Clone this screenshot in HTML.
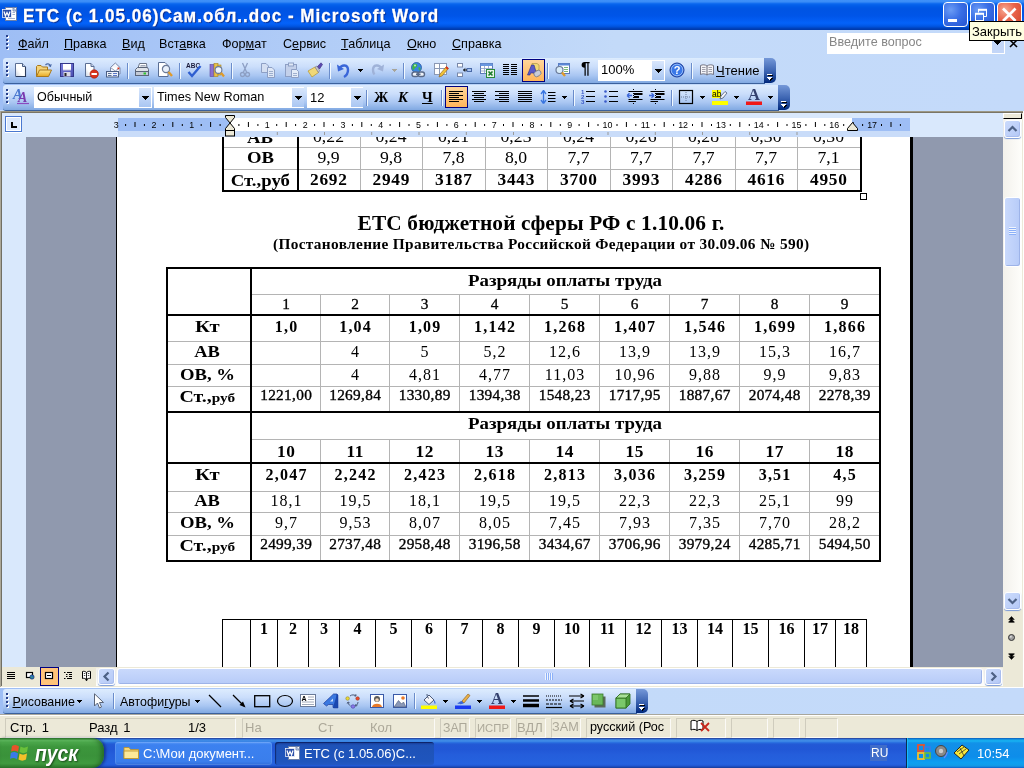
<!DOCTYPE html><html><head><meta charset="utf-8"><title>Word</title><style>
*{box-sizing:border-box;margin:0;padding:0}
html,body{width:1024px;height:768px;overflow:hidden;background:#c3daf9}
body{position:relative;font-family:"Liberation Sans",sans-serif;font-size:13px;color:#000}
.a{position:absolute}
.t{position:absolute;white-space:pre;line-height:1}
.ser{font-family:"Liberation Serif",serif}
.b{font-weight:bold}
u{text-decoration:underline}
#title{left:0;top:0;width:1024px;height:30px;background:linear-gradient(to bottom,#3f91f9 0,#3a8cf6 2px,#1a74f2 3px,#0a66ee 4px,#0460ea 5px,#0058e6 7px,#0054e3 9px,#0055e8 16px,#025cf2 20px,#0463fa 23px,#025cee 25px,#0050d8 27px,#0044c0 28px,#0038a8 30px)}
#dock{left:0;top:30px;width:1024px;height:80px;background:linear-gradient(to right,#9ebef5 0,#c3daf9 60%,#c4dafa 100%)}
.tb{position:absolute;border-radius:3px 0 0 3px;background:linear-gradient(to bottom,#ddecfe 0%,#cbdefb 35%,#a9c6f2 70%,#81a9e2 100%);border-bottom:1px solid #3b619c}
.tbend{position:absolute;border-radius:0 5px 5px 0;background:linear-gradient(to bottom,#7598d8 0%,#3a62b0 55%,#00287c 100%)}
.sep{position:absolute;width:2px;border-left:1px solid #6a8ccb;border-right:1px solid #f1f9ff}
.combo{position:absolute;background:#fff;height:21px}
.cbtn{position:absolute;width:12px;background:linear-gradient(to bottom,#d8e6fc,#a9c6f2)}
.chk{position:absolute;background:linear-gradient(to bottom,#ffd59a,#ffb55a);border:1px solid #000080}
.dd{position:absolute;width:0;height:0;border:3.500px solid transparent;border-top:4px solid #000;border-bottom:0}
.ic{position:absolute;width:16px;height:16px;overflow:visible}
.sp{position:absolute;border:1px solid;border-color:#cfccbd #fbfaf6 #fbfaf6 #cfccbd;height:20px;top:718px}
.dis{color:#aca899}
table.dt{position:absolute;border-collapse:collapse;table-layout:fixed;font-family:"Liberation Serif",serif}
table.dt td{border:1px solid #b4b4b4;text-align:center;vertical-align:top;padding:0;white-space:nowrap;overflow:hidden;line-height:1}
</style></head><body><div id="root" style="position:absolute;left:0;top:0;width:1024px;height:768px;overflow:hidden;will-change:transform">
<svg width="0" height="0" style="position:absolute"><defs><linearGradient id="gdoc" x1="1" y1="0" x2="0" y2="1"><stop offset="0" stop-color="#fff"/><stop offset=".6" stop-color="#fff"/><stop offset="1" stop-color="#c4cede"/></linearGradient><linearGradient id="gfold" x1="0" y1="0" x2="0" y2="1"><stop offset="0" stop-color="#fde690"/><stop offset="1" stop-color="#e8a820"/></linearGradient><linearGradient id="gsave" x1="0" y1="0" x2="1" y2="1"><stop offset="0" stop-color="#7a7ee0"/><stop offset="1" stop-color="#4a4eb0"/></linearGradient></defs></svg>
<div id="title" class="a"></div>
<svg class="a" style="left:2px;top:6px" width="16" height="16" viewBox="0 0 16 16"><rect x="3.500" y="1.500" width="11" height="13" fill="#fff" stroke="#6b7fa8"/><path d="M11 1.500 L14.500 5 H11Z" fill="#c9d6ee" stroke="#6b7fa8" stroke-width=".8"/><rect x="0.5" y="3.500" width="9" height="8" fill="#2b4fa8" stroke="#fff" stroke-width=".7"/><path d="M2 5.500 L3.400 10 L5 6.500 L6.600 10 L8 5.500" stroke="#fff" stroke-width="1.200" fill="none"/><path d="M6 12.500H13M10.500 8.500H13M10.500 6.500H13" stroke="#8a9cc4" stroke-width=".8"/></svg>
<div class="t b" style="left:22.500px;top:6px;font-size:19px;color:#fff;letter-spacing:1.100px;transform:scaleX(.9);transform-origin:0 0;-webkit-text-stroke:.3px #fff;text-shadow:1px 1px 1px #0a2a8a">ЕТС (с 1.05.06)Сам.обл..doc - Microsoft Word</div>
<div class="a" style="left:943px;top:2px;width:25px;height:25px;border:1px solid #fff;border-radius:4px;background:radial-gradient(circle at 30% 30%,#6b9cf5 0%,#3a6fe6 45%,#2453d0 100%)"></div>
<div class="a" style="left:970px;top:2px;width:25px;height:25px;border:1px solid #fff;border-radius:4px;background:radial-gradient(circle at 30% 30%,#6b9cf5 0%,#3a6fe6 45%,#2453d0 100%)"></div>
<div class="a" style="left:997px;top:2px;width:25px;height:25px;border:1px solid #fff;border-radius:4px;background:radial-gradient(circle at 30% 30%,#f7ab94 0%,#e8634a 45%,#cf4529 100%)"></div>
<div class="a" style="left:948px;top:19px;width:9px;height:3px;background:#fff"></div>
<svg class="a" style="left:969px;top:3px" width="24" height="24" viewBox="0 0 24 24" fill="none" stroke="#fff"><path d="M9.500 9.500V6.500H17.500V13.500H15" stroke-width="1"/><path d="M9 6.800H18" stroke-width="2"/><rect x="6.500" y="10.500" width="8" height="7" stroke-width="1"/><path d="M6 10.800H15" stroke-width="2"/></svg>
<svg class="a" style="left:997px;top:2px" width="25" height="25" viewBox="0 0 25 25"><path d="M6 6.500L18.500 19M18.500 6.500L6 19" stroke="#fff" stroke-width="2.700"/></svg>
<div id="dock" class="a"></div>
<div class="a" style="left:7px;top:36px;width:2px;height:14px;background:repeating-linear-gradient(to bottom,#fff 0,#fff 2px,transparent 2px,transparent 4px)"></div>
<div class="a" style="left:6px;top:35px;width:2px;height:14px;background:repeating-linear-gradient(to bottom,#27408b 0,#27408b 2px,transparent 2px,transparent 4px)"></div>
<div class="t" style="left:18px;top:38px;font-size:12.600px"><u>Ф</u>айл</div>
<div class="t" style="left:64px;top:38px;font-size:12.600px"><u>П</u>равка</div>
<div class="t" style="left:122px;top:38px;font-size:12.600px"><u>В</u>ид</div>
<div class="t" style="left:159px;top:38px;font-size:12.600px">Вст<u>а</u>вка</div>
<div class="t" style="left:222px;top:38px;font-size:12.600px">Фор<u>м</u>ат</div>
<div class="t" style="left:283px;top:38px;font-size:12.600px">С<u>е</u>рвис</div>
<div class="t" style="left:341px;top:38px;font-size:12.600px"><u>Т</u>аблица</div>
<div class="t" style="left:407px;top:38px;font-size:12.600px"><u>О</u>кно</div>
<div class="t" style="left:452px;top:38px;font-size:12.600px"><u>С</u>правка</div>
<div class="a" style="left:827px;top:33px;width:178px;height:21px;background:#fff"></div>
<div class="t" style="left:829px;top:36px;font-size:12.600px;color:#868686">Введите вопрос</div>
<div class="a" style="left:992px;top:34px;width:12px;height:19px;background:#c3d6f8"></div>
<svg class="a" style="left:994px;top:41px" width="7" height="4" fill="#000" shape-rendering="crispEdges"><rect x="0.0" y="0" width="7" height="1"/><rect x="1.0" y="1" width="5" height="1"/><rect x="2.0" y="2" width="3" height="1"/><rect x="3.0" y="3" width="1" height="1"/></svg>
<svg class="a" style="left:1009px;top:39px" width="9" height="9" viewBox="0 0 9 9"><path d="M1 1L8 8M8 1L1 8" stroke="#000" stroke-width="1.600"/></svg>
<div class="tb" style="left:3px;top:58px;width:762px;height:26px"></div>
<div class="tbend" style="left:764px;top:58px;width:12px;height:25px"></div>
<svg class="a" style="left:767px;top:73px" width="8" height="8" shape-rendering="crispEdges"><g fill="#000"><rect x="1" y="2" width="5" height="1"/><rect x="1" y="5" width="5" height="1"/><rect x="2" y="6" width="3" height="1"/><rect x="3" y="7" width="1" height="1"/></g><g fill="#fff"><rect x="0" y="1" width="5" height="1"/><rect x="0" y="4" width="5" height="1"/><rect x="1" y="5" width="3" height="1"/><rect x="2" y="6" width="1" height="1"/></g></svg>
<div class="a" style="left:7px;top:63px;width:2px;height:14px;background:repeating-linear-gradient(to bottom,#fff 0,#fff 2px,transparent 2px,transparent 4px)"></div>
<div class="a" style="left:6px;top:62px;width:2px;height:14px;background:repeating-linear-gradient(to bottom,#27408b 0,#27408b 2px,transparent 2px,transparent 4px)"></div>
<svg class="ic" style="left:13px;top:62px;" viewBox="0 0 16 16"><path d="M2.500 1.500H9.500L12.500 4.500V14.500H2.500Z" fill="url(#gdoc)" stroke="#5a6e94"/><path d="M3 14.500H12.500V5" fill="none" stroke="#2a3a5a" stroke-width="1.100"/><path d="M9.500 1.500V4.500H12.500" fill="#c8d4ea" stroke="#4a5e84"/></svg>
<svg class="ic" style="left:36px;top:62px;" viewBox="0 0 16 16"><path d="M.5 14.500V4.500L1.500 3.500H5L6.500 5H11.500V8" fill="#f4d37a" stroke="#a8781c"/><path d="M.5 14.500L3.500 8H15.500L12.500 14.500Z" fill="url(#gfold)" stroke="#a8781c"/><path d="M9.500 3C11 1.200 13.500 1.500 14.500 4" stroke="#4a6aa8" stroke-width="1.200" fill="none"/><path d="M15.800 2L14.800 5.200L12.200 3.800Z" fill="#4a6aa8"/></svg>
<svg class="ic" style="left:59px;top:62px;" viewBox="0 0 16 16"><rect x="1.500" y="1.500" width="13" height="13" fill="url(#gsave)" stroke="#33378a"/><rect x="4" y="2" width="8" height="6" fill="#fff"/><path d="M4 8H12" stroke="#c8c8e0"/><rect x="4.500" y="10" width="7" height="4.500" fill="#d8d8e8"/><rect x="5.500" y="11" width="2" height="3" fill="#222"/></svg>
<svg class="ic" style="left:83px;top:62px;" viewBox="0 0 16 16"><path d="M2.500 1.500H8L11 4.500V14.500H2.500Z" fill="url(#gdoc)" stroke="#5a6e94"/><path d="M8 1.500V4.500H11" fill="#c8d4ea" stroke="#5a6e94"/><circle cx="11.200" cy="12" r="4.200" fill="#d8321c" stroke="#a01808" stroke-width=".6"/><rect x="8.500" y="11" width="5.400" height="2" fill="#fff"/></svg>
<svg class="ic" style="left:105px;top:62px;" viewBox="0 0 16 16"><path d="M5.500 5.500L10.300 1L15 5.500V12H5.500Z" fill="#f4f6fb" stroke="#7a88a8"/><path d="M5.500 5.500L10.300 9L15 5.500" fill="#fff" stroke="#7a88a8" stroke-width=".8"/><rect x="12.500" y="5.500" width="1.800" height="1.800" fill="#d8321c"/><rect x="1.500" y="9.500" width="12" height="5.500" fill="#eef2fa" stroke="#4a5e84"/><path d="M3 11.500H6.500M3 13.500H6.500" stroke="#5a6e94"/><path d="M8 11.500H12M8 13.500H12" stroke="#5a78c8"/></svg>
<div class="sep" style="left:127px;top:63px;height:16px"></div>
<svg class="ic" style="left:134px;top:62px;" viewBox="0 0 16 16"><path d="M4 6L5.500 1.500H12.500L13 6" fill="#fff" stroke="#6a7488"/><path d="M6.500 3.500H11.500M6 5H12" stroke="#8a94a8" stroke-width=".8"/><path d="M1.500 7.500L3.500 5.500H13.500L14.500 7.500V13.500H1.500Z" fill="#dfe3ea" stroke="#5a6478"/><rect x="1.500" y="9.500" width="13" height="4" fill="#c4cad6" stroke="#5a6478"/><rect x="9.500" y="10.500" width="2.500" height="2" fill="#2fc22f"/></svg>
<svg class="ic" style="left:157px;top:62px;" viewBox="0 0 16 16"><path d="M1.500 .5H8L11 3.500V14.500H1.500Z" fill="#fff" stroke="#5a6e94"/><circle cx="9" cy="7" r="3.600" fill="#e8f0fb" stroke="#6a7a98" stroke-width="1.200"/><path d="M11.500 10L15 14" stroke="#e09a2a" stroke-width="2.400"/></svg>
<div class="sep" style="left:179px;top:63px;height:16px"></div>
<svg class="ic" style="left:186px;top:62px;" viewBox="0 0 16 16"><text x="0" y="6" font-family="Liberation Sans,sans-serif" font-size="6.500" font-weight="bold" fill="#1a1a3a">ABC</text><path d="M2.500 10L6 14L14.500 4" stroke="#2f5fd0" stroke-width="2.400" fill="none"/></svg>
<svg class="ic" style="left:209px;top:62px;" viewBox="0 0 16 16"><rect x="1" y="2.500" width="4" height="12" fill="#8a70d0" stroke="#5a48a0" stroke-width=".6"/><rect x="5" y="1.500" width="4" height="13" fill="#e8c04a" stroke="#a8841c" stroke-width=".6"/><rect x="9" y="3" width="3" height="10" fill="#e8c04a" stroke="#a8841c" stroke-width=".6"/><circle cx="9.500" cy="8" r="3.400" fill="#eef4fc" stroke="#6a7a98" stroke-width="1.100"/><path d="M12 10.800L15 14.500" stroke="#e09a2a" stroke-width="2.200"/></svg>
<div class="sep" style="left:231px;top:63px;height:16px"></div>
<svg class="ic" style="left:237px;top:62px;" viewBox="0 0 16 16"><path d="M5.500 1L9.500 10M10.500 1L6.500 10" stroke="#8d9fc4" stroke-width="1.300" fill="none"/><circle cx="5.500" cy="12.500" r="2" fill="none" stroke="#8d9fc4" stroke-width="1.300"/><circle cx="10.500" cy="12.500" r="2" fill="none" stroke="#8d9fc4" stroke-width="1.300"/></svg>
<svg class="ic" style="left:260px;top:62px;" viewBox="0 0 16 16"><path d="M1.500 1.500H6L8.500 4V10.500H1.500Z" fill="#d4dff2" stroke="#8d9fc4"/><path d="M7.500 5.500H12L14.500 8V15.500H7.500Z" fill="#dfe8f6" stroke="#8d9fc4"/><path d="M9 9.500H13M9 11.500H13M9 13.500H13" stroke="#8d9fc4" stroke-width=".8"/></svg>
<svg class="ic" style="left:284px;top:62px;" viewBox="0 0 16 16"><rect x="1.500" y="2.500" width="11" height="12" fill="#c3d0ea" stroke="#8d9fc4"/><rect x="4.500" y="1" width="5" height="3" fill="#dfe8f6" stroke="#8d9fc4"/><path d="M7.500 7.500H12.500L14.500 9.500V15.500H7.500Z" fill="#e4ecf8" stroke="#8d9fc4"/><path d="M9 11.500H13M9 13.500H13" stroke="#8d9fc4" stroke-width=".8"/></svg>
<svg class="ic" style="left:307px;top:62px;" viewBox="0 0 16 16"><path d="M1 9L8 5L11.500 10.500L5 15Z" fill="#f0d878" stroke="#b8962a" stroke-width=".7"/><path d="M8 5L10 4L12.500 8.500L11.500 10.500Z" fill="#c8c8d0" stroke="#7a7a88" stroke-width=".6"/><path d="M10.500 4.500L14 .8L15.500 2.500L12.500 7Z" fill="#5a48b0" stroke="#3a2a80" stroke-width=".6"/></svg>
<div class="sep" style="left:329px;top:63px;height:16px"></div>
<svg class="ic" style="left:336px;top:62px;" viewBox="0 0 16 16"><path d="M3.500 6.500C6 2 12 2.500 12 8C12 11 10.500 13.500 8 15" stroke="#3a66d8" stroke-width="2.400" fill="none"/><path d="M1 2.500L2 9.500L8 7Z" fill="#3a66d8"/></svg>
<svg class="a" style="left:358px;top:69px" width="5" height="3" fill="#000" shape-rendering="crispEdges"><rect x="0.0" y="0" width="5" height="1"/><rect x="1.0" y="1" width="3" height="1"/><rect x="2.0" y="2" width="1" height="1"/></svg>
<svg class="ic" style="left:369px;top:62px;" viewBox="0 0 16 16"><path d="M12.500 6.500C10 2 4 2.500 4 8C4 10 4.500 11.500 5.500 12.500" stroke="#9fb2d8" stroke-width="2.400" fill="none"/><path d="M15 2.500L14 9.500L8 7Z" fill="#9fb2d8"/></svg>
<svg class="a" style="left:392px;top:69px" width="5" height="3" fill="#a8a59a" shape-rendering="crispEdges"><rect x="0.0" y="0" width="5" height="1"/><rect x="1.0" y="1" width="3" height="1"/><rect x="2.0" y="2" width="1" height="1"/></svg>
<div class="sep" style="left:403px;top:63px;height:16px"></div>
<svg class="ic" style="left:410px;top:62px;" viewBox="0 0 16 16"><circle cx="6.500" cy="5.500" r="5" fill="#3a86e0" stroke="#1a4a98" stroke-width=".7"/><path d="M4 2C6 1 8 2.500 7 4.500C6 6 4.500 5.500 4 7.500C3.500 9 2.500 8 2.300 6C2.300 4 3 2.500 4 2ZM8.500 5.500C10 4.500 11 6 10.300 7.800C9.500 9.300 8.500 8.500 8.500 5.500Z" fill="#3fb83f"/><circle cx="5" cy="3.500" r="1" fill="#d8f0ff" opacity=".8"/><rect x="2" y="10" width="6.500" height="4.500" rx="2.200" fill="#eef2f8" stroke="#5a6a88" stroke-width="1.400"/><rect x="8" y="10" width="6.500" height="4.500" rx="2.200" fill="#eef2f8" stroke="#5a6a88" stroke-width="1.400"/><path d="M6 12.250H10.500" stroke="#5a6a88" stroke-width="1.600"/></svg>
<svg class="ic" style="left:433px;top:62px;" viewBox="0 0 16 16"><rect x="1.500" y="1.500" width="12" height="11" fill="#fff" stroke="#8a98b4"/><path d="M1.500 6.500H13.500M6.500 1.500V12.500" stroke="#8a98b4"/><path d="M6 15L7 12L13.500 4.500L15.500 6.500L9 14Z" fill="#f0c23a" stroke="#8a5a1a" stroke-width=".6"/><path d="M13 5L15 7" stroke="#d8321c" stroke-width="1.800"/></svg>
<svg class="ic" style="left:456px;top:62px;" viewBox="0 0 16 16"><rect x="1.500" y="1.500" width="5" height="3.500" fill="#fff" stroke="#7a88a8"/><rect x="1.500" y="11" width="5" height="3.500" fill="#fff" stroke="#7a88a8"/><rect x="11" y="6.500" width="4.500" height="3" fill="#a8c4f0" stroke="#4a6aa8"/><path d="M7.500 8H11M7.500 8L9.300 6.500M7.500 8L9.300 9.500" stroke="#000" stroke-width="1" fill="none"/></svg>
<svg class="ic" style="left:479px;top:62px;" viewBox="0 0 16 16"><rect x="1.500" y="1.500" width="12" height="10" fill="#fff" stroke="#5a78b8"/><rect x="1.500" y="1.500" width="12" height="2.500" fill="#6a98e0"/><path d="M1.500 6.500H13.500M1.500 9H13.500M5.500 4V11.500M9.500 4V11.500" stroke="#8aa0c8" stroke-width=".8"/><rect x="7.500" y="7.500" width="8" height="8" fill="#e8f4e8" stroke="#2a8a3a"/><path d="M9.500 9.500L13.500 13.500M13.500 9.500L9.500 13.500" stroke="#1a7a2a" stroke-width="1.600"/></svg>
<svg class="ic" style="left:502px;top:62px;" viewBox="0 0 16 16"><path d="M1 2.500H7M9 2.500H15M1 4.500H7M9 4.500H15M1 6.500H7M9 6.500H15M1 8.500H7M9 8.500H15M1 10.500H7M9 10.500H15M1 12.500H7M9 12.500H15" stroke="#000" stroke-width="1"/></svg>
<div class="chk" style="left:522px;top:59px;width:23px;height:23px"></div>
<svg class="ic" style="left:526px;top:62px;" viewBox="0 0 16 16"><path d="M6 1.500H11L13 3V9H6Z" fill="#f0d878" stroke="#a08a3a" stroke-width=".6"/><path d="M1.500 13L5.500 3H8L11 13H8.500L8 11H4.500L4 13Z" fill="#5a5ac8" stroke="#2a2a88" stroke-width=".6"/><ellipse cx="11.500" cy="11.500" rx="3.800" ry="2.800" transform="rotate(-35 11.500 11.500)" fill="#c8ccd8" stroke="#6a7080" stroke-width=".7"/></svg>
<div class="sep" style="left:547px;top:63px;height:16px"></div>
<svg class="ic" style="left:554px;top:62px;" viewBox="0 0 16 16"><rect x="4.500" y="1.500" width="11" height="10" fill="#fff" stroke="#5a78b8"/><rect x="4.500" y="1.500" width="11" height="2" fill="#5a88d8"/><path d="M10 5.500H14M10 7.500H14M10 9.500H14" stroke="#7ab87a"/><circle cx="5.500" cy="8" r="3.500" fill="#d8ecf8" stroke="#6a7a98" stroke-width="1.200"/><path d="M8 10.500L11 14" stroke="#e09a2a" stroke-width="2.400"/></svg>
<svg class="ic" style="left:578px;top:62px;" viewBox="0 0 16 16"><text x="7.500" y="12.300" text-anchor="middle" font-family="Liberation Sans,sans-serif" font-weight="bold" font-size="16.500" fill="#000">¶</text></svg>
<div class="combo" style="left:598px;top:60px;width:67px;height:21px"></div><div class="cbtn" style="left:652px;top:61px;height:19px"></div>
<svg class="a" style="left:655px;top:69px" width="7" height="4" fill="#000" shape-rendering="crispEdges"><rect x="0.0" y="0" width="7" height="1"/><rect x="1.0" y="1" width="5" height="1"/><rect x="2.0" y="2" width="3" height="1"/><rect x="3.0" y="3" width="1" height="1"/></svg>
<div class="t" style="left:601px;top:63px;font-size:13px">100%</div>
<svg class="ic" style="left:669px;top:62px;" viewBox="0 0 16 16"><circle cx="8" cy="8" r="7" fill="#3a78e8" stroke="#1a3a98"/><circle cx="8" cy="8" r="5.800" fill="none" stroke="#a8c8f8" stroke-width=".8"/><text x="8" y="12" text-anchor="middle" font-family="Liberation Sans,sans-serif" font-weight="bold" font-size="11" fill="#fff">?</text></svg>
<div class="sep" style="left:691px;top:63px;height:16px"></div>
<svg class="ic" style="left:699px;top:62px;" viewBox="0 0 16 16"><path d="M1.500 3.500C3.500 2.500 6 2.500 8 4C10 2.500 12.500 2.500 14.500 3.500V12.500C12.500 11.500 10 11.500 8 13C6 11.500 3.500 11.500 1.500 12.500Z" fill="#f4f4f8" stroke="#6a6a78" stroke-width=".9"/><path d="M8 4V13" stroke="#6a6a78"/><path d="M3 5.500H6.500M3 7.500H6.500M3 9.500H6.500M9.500 5.500H13M9.500 7.500H13M9.500 9.500H13" stroke="#8a8a98" stroke-width=".8"/></svg>
<div class="t" style="left:716px;top:64px;font-size:13px"><u>Ч</u>тение</div>
<div class="tb" style="left:3px;top:85px;width:776px;height:26px"></div>
<div class="tbend" style="left:778px;top:85px;width:12px;height:25px"></div>
<svg class="a" style="left:781px;top:100px" width="8" height="8" shape-rendering="crispEdges"><g fill="#000"><rect x="1" y="2" width="5" height="1"/><rect x="1" y="5" width="5" height="1"/><rect x="2" y="6" width="3" height="1"/><rect x="3" y="7" width="1" height="1"/></g><g fill="#fff"><rect x="0" y="1" width="5" height="1"/><rect x="0" y="4" width="5" height="1"/><rect x="1" y="5" width="3" height="1"/><rect x="2" y="6" width="1" height="1"/></g></svg>
<div class="a" style="left:7px;top:90px;width:2px;height:14px;background:repeating-linear-gradient(to bottom,#fff 0,#fff 2px,transparent 2px,transparent 4px)"></div>
<div class="a" style="left:6px;top:89px;width:2px;height:14px;background:repeating-linear-gradient(to bottom,#27408b 0,#27408b 2px,transparent 2px,transparent 4px)"></div>
<svg class="ic" style="left:14px;top:89px;" viewBox="0 0 16 16"><text x="-1" y="10" font-family="Liberation Serif,serif" font-style="italic" font-weight="bold" font-size="14.500" fill="#4a78d0">A</text><text x="4" y="13" font-family="Liberation Serif,serif" font-style="italic" font-weight="bold" font-size="14" fill="#7a3ab0">A</text><path d="M3 14.500H15" stroke="#8a4ac0" stroke-width="1.200"/></svg>
<div class="combo" style="left:34px;top:87px;width:118px"></div><div class="cbtn" style="left:139px;top:88px;height:19px"></div>
<svg class="a" style="left:142px;top:96px" width="7" height="4" fill="#000" shape-rendering="crispEdges"><rect x="0.0" y="0" width="7" height="1"/><rect x="1.0" y="1" width="5" height="1"/><rect x="2.0" y="2" width="3" height="1"/><rect x="3.0" y="3" width="1" height="1"/></svg>
<div class="t" style="left:37px;top:91px;font-size:12.500px">Обычный</div>
<div class="combo" style="left:154px;top:87px;width:150px"></div><div class="cbtn" style="left:292px;top:88px;height:19px"></div>
<svg class="a" style="left:295px;top:96px" width="7" height="4" fill="#000" shape-rendering="crispEdges"><rect x="0.0" y="0" width="7" height="1"/><rect x="1.0" y="1" width="5" height="1"/><rect x="2.0" y="2" width="3" height="1"/><rect x="3.0" y="3" width="1" height="1"/></svg>
<div class="t" style="left:157px;top:91px;font-size:12.700px">Times New Roman</div>
<div class="combo" style="left:307px;top:87px;width:56px"></div><div class="cbtn" style="left:351px;top:88px;height:19px"></div>
<svg class="a" style="left:354px;top:96px" width="7" height="4" fill="#000" shape-rendering="crispEdges"><rect x="0.0" y="0" width="7" height="1"/><rect x="1.0" y="1" width="5" height="1"/><rect x="2.0" y="2" width="3" height="1"/><rect x="3.0" y="3" width="1" height="1"/></svg>
<div class="t" style="left:310px;top:91px;font-size:13px">12</div>
<div class="sep" style="left:366px;top:90px;height:16px"></div>
<div class="t ser b" style="left:374px;top:90px;font-size:14.500px">Ж</div>
<div class="t ser b" style="left:398px;top:90px;font-size:14.500px;font-style:italic">К</div>
<div class="t ser b" style="left:422px;top:90px;font-size:14.500px"><u>Ч</u></div>
<div class="sep" style="left:441px;top:90px;height:16px"></div>
<div class="chk" style="left:445px;top:86px;width:23px;height:22px"></div>
<svg class="ic" style="left:449px;top:89px;" viewBox="0 0 16 16"><path d="M0 2.5H14M0 4.5H10M0 6.5H14M0 8.5H10M0 10.5H14M0 12.5H10" stroke="#000" stroke-width="1"/></svg>
<svg class="ic" style="left:471px;top:89px;" viewBox="0 0 16 16"><path d="M1 2.5H15M3 4.5H13M1 6.5H15M3 8.5H13M1 10.5H15M3 12.5H13" stroke="#000" stroke-width="1"/></svg>
<svg class="ic" style="left:494px;top:89px;" viewBox="0 0 16 16"><path d="M1 2.5H15M5 4.5H15M1 6.5H15M5 8.5H15M1 10.5H15M5 12.5H15" stroke="#000" stroke-width="1"/></svg>
<svg class="ic" style="left:517px;top:89px;" viewBox="0 0 16 16"><path d="M1 2.5H15M1 4.5H15M1 6.5H15M1 8.5H15M1 10.5H15M1 12.5H15" stroke="#000" stroke-width="1"/></svg>
<svg class="ic" style="left:540px;top:89px;" viewBox="0 0 16 16"><path d="M3.500 2V14M3.500 1.500L1 5M3.500 1.500L6 5M3.500 14.500L1 11M3.500 14.500L6 11" stroke="#3a76e0" stroke-width="1.300" fill="none"/><path d="M8 3.500H15.500M8 6.500H15.500M8 9.500H15.500M8 12.500H15.500" stroke="#000" stroke-width="1"/></svg>
<svg class="a" style="left:562px;top:96px" width="5" height="3" fill="#000" shape-rendering="crispEdges"><rect x="0.0" y="0" width="5" height="1"/><rect x="1.0" y="1" width="3" height="1"/><rect x="2.0" y="2" width="1" height="1"/></svg>
<div class="sep" style="left:573px;top:90px;height:16px"></div>
<svg class="ic" style="left:580px;top:89px;" viewBox="0 0 16 16"><path d="M6 2.500H15M6 7.500H15M6 12.500H15" stroke="#000" stroke-width="1"/><text x="1" y="5" font-family="Liberation Sans,sans-serif" font-size="6" font-weight="bold" fill="#3a5ac8">1</text><text x="1" y="10" font-family="Liberation Sans,sans-serif" font-size="6" font-weight="bold" fill="#3a5ac8">2</text><text x="1" y="15" font-family="Liberation Sans,sans-serif" font-size="6" font-weight="bold" fill="#3a5ac8">3</text></svg>
<svg class="ic" style="left:603px;top:89px;" viewBox="0 0 16 16"><path d="M6 2.500H15M6 7.500H15M6 12.500H15" stroke="#000" stroke-width="1"/><circle cx="2.500" cy="2.500" r="1.300" fill="#3a5ac8"/><circle cx="2.500" cy="7.500" r="1.300" fill="#3a5ac8"/><circle cx="2.500" cy="12.500" r="1.300" fill="#3a5ac8"/></svg>
<svg class="ic" style="left:627px;top:89px;" viewBox="0 0 16 16"><path d="M1.500 2.500H15.500M1.500 10.500H15.500M1.500 12.500H9" stroke="#000" stroke-width="1"/><rect x="7" y="4" width="8.500" height="2" fill="#000"/><rect x="7" y="7" width="5" height="2" fill="#000"/><path d="M6.500 0V15" stroke="#000" stroke-dasharray="1 1"/><path d="M0 6.500H5M0 6.500L2.500 4.300M0 6.500L2.500 8.700" stroke="#3a66d8" stroke-width="1.300" fill="none"/></svg>
<svg class="ic" style="left:649px;top:89px;" viewBox="0 0 16 16"><path d="M1.500 2.500H15.500M1.500 10.500H15.500M1.500 12.500H9" stroke="#000" stroke-width="1"/><rect x="7" y="4" width="8.500" height="2" fill="#000"/><rect x="7" y="7" width="5" height="2" fill="#000"/><path d="M6.500 0V15" stroke="#000" stroke-dasharray="1 1"/><path d="M0 6.500H5M5 6.500L2.500 4.300M5 6.500L2.500 8.700" stroke="#3a66d8" stroke-width="1.300" fill="none"/></svg>
<div class="sep" style="left:671px;top:90px;height:16px"></div>
<svg class="ic" style="left:678px;top:89px;" viewBox="0 0 16 16"><rect x="1.500" y="1.500" width="13" height="13" fill="none" stroke="#000" stroke-width="1.200"/><path d="M8 3V13M3 8H13" stroke="#6a7a98" stroke-dasharray="1 1"/></svg>
<svg class="a" style="left:700px;top:96px" width="5" height="3" fill="#000" shape-rendering="crispEdges"><rect x="0.0" y="0" width="5" height="1"/><rect x="1.0" y="1" width="3" height="1"/><rect x="2.0" y="2" width="1" height="1"/></svg>
<svg class="ic" style="left:712px;top:89px;" viewBox="0 0 16 16"><rect x="0" y="1" width="9" height="8" fill="#ffff00"/><text x="0" y="7.500" font-family="Liberation Sans,sans-serif" font-size="8.500" fill="#000">ab</text><path d="M8 10L9 7L13 2.500L15 4L11 9Z" fill="#f4f4f8" stroke="#4a5a7a" stroke-width=".8"/><rect x="0" y="12" width="16" height="4" fill="#ffff00"/></svg>
<svg class="a" style="left:734px;top:96px" width="5" height="3" fill="#000" shape-rendering="crispEdges"><rect x="0.0" y="0" width="5" height="1"/><rect x="1.0" y="1" width="3" height="1"/><rect x="2.0" y="2" width="1" height="1"/></svg>
<svg class="ic" style="left:746px;top:89px;" viewBox="0 0 16 16"><text x="8" y="11.300" text-anchor="middle" font-family="Liberation Serif,serif" font-weight="bold" font-size="16.500" fill="#33406e">A</text><rect x="0" y="12.500" width="16" height="3.500" fill="#f01818"/></svg>
<svg class="a" style="left:768px;top:96px" width="5" height="3" fill="#000" shape-rendering="crispEdges"><rect x="0.0" y="0" width="5" height="1"/><rect x="1.0" y="1" width="3" height="1"/><rect x="2.0" y="2" width="1" height="1"/></svg>
<div class="a" style="left:0;top:111px;width:1024px;height:1px;background:#9d9885"></div>
<div class="a" style="left:0;top:112px;width:1024px;height:1px;background:#7a7565"></div>
<div class="a" style="left:0;top:113px;width:1024px;height:24px;background:#d9e8fc"></div>
<div class="a" style="left:118px;top:131px;width:792px;height:6px;background:#c9dcf9"></div>
<div class="a" style="left:0;top:111px;width:1px;height:576px;background:#aca899"></div>
<div class="a" style="left:1px;top:113px;width:1px;height:574px;background:#716f64"></div>
<div class="a" style="left:2px;top:137px;width:24px;height:530px;background:#d9e8fc"></div>
<div class="a" style="left:5px;top:116px;width:17px;height:16px;background:#dbe8fc;border:1px solid #4a78d0;box-shadow:inset 0 0 0 1px #fff,0 1px 0 #fff"></div>
<div class="a" style="left:11px;top:122px;width:2px;height:6px;background:#000"></div><div class="a" style="left:11px;top:126px;width:6px;height:2px;background:#000"></div>
<div class="a" style="left:118px;top:118px;width:792px;height:13px;background:#9ebef5"></div>
<div class="a" style="left:230px;top:118px;width:622px;height:13px;background:#fff"></div>
<svg class="a" style="left:118px;top:118px;overflow:visible" width="792" height="13" font-family="Liberation Sans,sans-serif" font-size="8.900" fill="#000"><text x="-1.9" y="9.500" text-anchor="middle">3</text><rect x="7.1" y="6" width="1" height="2" fill="#000"/><rect x="16.5" y="4" width="1" height="5" fill="#000"/><rect x="25.9" y="6" width="1" height="2" fill="#000"/><text x="35.9" y="9.500" text-anchor="middle">2</text><rect x="44.9" y="6" width="1" height="2" fill="#000"/><rect x="54.3" y="4" width="1" height="5" fill="#000"/><rect x="63.8" y="6" width="1" height="2" fill="#000"/><text x="73.7" y="9.500" text-anchor="middle">1</text><rect x="82.7" y="6" width="1" height="2" fill="#000"/><rect x="92.1" y="4" width="1" height="5" fill="#000"/><rect x="101.6" y="6" width="1" height="2" fill="#000"/><rect x="120.4" y="6" width="1" height="2" fill="#000"/><rect x="129.9" y="4" width="1" height="5" fill="#000"/><rect x="139.4" y="6" width="1" height="2" fill="#000"/><text x="149.3" y="9.500" text-anchor="middle">1</text><rect x="158.2" y="6" width="1" height="2" fill="#000"/><rect x="167.7" y="4" width="1" height="5" fill="#000"/><rect x="177.1" y="6" width="1" height="2" fill="#000"/><text x="187.1" y="9.500" text-anchor="middle">2</text><rect x="196.1" y="6" width="1" height="2" fill="#000"/><rect x="205.5" y="4" width="1" height="5" fill="#000"/><rect x="214.9" y="6" width="1" height="2" fill="#000"/><text x="224.9" y="9.500" text-anchor="middle">3</text><rect x="233.9" y="6" width="1" height="2" fill="#000"/><rect x="243.3" y="4" width="1" height="5" fill="#000"/><rect x="252.8" y="6" width="1" height="2" fill="#000"/><text x="262.7" y="9.500" text-anchor="middle">4</text><rect x="271.6" y="6" width="1" height="2" fill="#000"/><rect x="281.1" y="4" width="1" height="5" fill="#000"/><rect x="290.5" y="6" width="1" height="2" fill="#000"/><text x="300.5" y="9.500" text-anchor="middle">5</text><rect x="309.4" y="6" width="1" height="2" fill="#000"/><rect x="318.9" y="4" width="1" height="5" fill="#000"/><rect x="328.4" y="6" width="1" height="2" fill="#000"/><text x="338.3" y="9.500" text-anchor="middle">6</text><rect x="347.2" y="6" width="1" height="2" fill="#000"/><rect x="356.7" y="4" width="1" height="5" fill="#000"/><rect x="366.1" y="6" width="1" height="2" fill="#000"/><text x="376.1" y="9.500" text-anchor="middle">7</text><rect x="385.0" y="6" width="1" height="2" fill="#000"/><rect x="394.5" y="4" width="1" height="5" fill="#000"/><rect x="404.0" y="6" width="1" height="2" fill="#000"/><text x="413.9" y="9.500" text-anchor="middle">8</text><rect x="422.8" y="6" width="1" height="2" fill="#000"/><rect x="432.3" y="4" width="1" height="5" fill="#000"/><rect x="441.8" y="6" width="1" height="2" fill="#000"/><text x="451.7" y="9.500" text-anchor="middle">9</text><rect x="460.6" y="6" width="1" height="2" fill="#000"/><rect x="470.1" y="4" width="1" height="5" fill="#000"/><rect x="479.5" y="6" width="1" height="2" fill="#000"/><text x="489.5" y="9.500" text-anchor="middle">10</text><rect x="498.5" y="6" width="1" height="2" fill="#000"/><rect x="507.9" y="4" width="1" height="5" fill="#000"/><rect x="517.3" y="6" width="1" height="2" fill="#000"/><text x="527.3" y="9.500" text-anchor="middle">11</text><rect x="536.2" y="6" width="1" height="2" fill="#000"/><rect x="545.7" y="4" width="1" height="5" fill="#000"/><rect x="555.1" y="6" width="1" height="2" fill="#000"/><text x="565.1" y="9.500" text-anchor="middle">12</text><rect x="574.0" y="6" width="1" height="2" fill="#000"/><rect x="583.5" y="4" width="1" height="5" fill="#000"/><rect x="593.0" y="6" width="1" height="2" fill="#000"/><text x="602.9" y="9.500" text-anchor="middle">13</text><rect x="611.8" y="6" width="1" height="2" fill="#000"/><rect x="621.3" y="4" width="1" height="5" fill="#000"/><rect x="630.8" y="6" width="1" height="2" fill="#000"/><text x="640.7" y="9.500" text-anchor="middle">14</text><rect x="649.6" y="6" width="1" height="2" fill="#000"/><rect x="659.1" y="4" width="1" height="5" fill="#000"/><rect x="668.5" y="6" width="1" height="2" fill="#000"/><text x="678.5" y="9.500" text-anchor="middle">15</text><rect x="687.4" y="6" width="1" height="2" fill="#000"/><rect x="696.9" y="4" width="1" height="5" fill="#000"/><rect x="706.3" y="6" width="1" height="2" fill="#000"/><text x="716.3" y="9.500" text-anchor="middle">16</text><rect x="725.2" y="6" width="1" height="2" fill="#000"/><rect x="734.7" y="4" width="1" height="5" fill="#000"/><rect x="744.1" y="6" width="1" height="2" fill="#000"/><text x="754.1" y="9.500" text-anchor="middle">17</text><rect x="763.0" y="6" width="1" height="2" fill="#000"/><rect x="772.5" y="4" width="1" height="5" fill="#000"/><rect x="781.9" y="6" width="1" height="2" fill="#000"/></svg>
<svg class="a" style="left:118px;top:132px" width="792" height="4"><rect x="158.8" y="0" width="1" height="3" fill="#9a9a9a"/><rect x="206.0" y="0" width="1" height="3" fill="#9a9a9a"/><rect x="253.2" y="0" width="1" height="3" fill="#9a9a9a"/><rect x="300.5" y="0" width="1" height="3" fill="#9a9a9a"/><rect x="347.8" y="0" width="1" height="3" fill="#9a9a9a"/><rect x="395.0" y="0" width="1" height="3" fill="#9a9a9a"/><rect x="442.2" y="0" width="1" height="3" fill="#9a9a9a"/><rect x="489.5" y="0" width="1" height="3" fill="#9a9a9a"/><rect x="536.8" y="0" width="1" height="3" fill="#9a9a9a"/><rect x="584.0" y="0" width="1" height="3" fill="#9a9a9a"/><rect x="631.2" y="0" width="1" height="3" fill="#9a9a9a"/><rect x="678.5" y="0" width="1" height="3" fill="#9a9a9a"/></svg>
<svg class="a" style="left:224px;top:114px" width="12" height="23" viewBox="0 0 12 23"><path d="M1.500 1.500H10.500V3.500L6 9L1.500 3.500Z" fill="#ece9d8" stroke="#000"/><path d="M6 9L10.500 14.500V16.500H1.500V14.500Z" fill="#ece9d8" stroke="#000"/><rect x="1.500" y="16.500" width="9" height="5.500" fill="#ece9d8" stroke="#000"/></svg>
<svg class="a" style="left:846px;top:121px" width="14" height="11" viewBox="0 0 14 11"><path d="M1.500 9.500V7.500L6.500 1.500L11.500 7.500V9.500Z" fill="#ece9d8" stroke="#000"/></svg>
<div class="a" style="left:26px;top:137px;width:977px;height:530px;background:#9099ae"></div>
<div class="a" id="page" style="left:116px;top:137px;width:797px;height:530px;background:#fff;border-left:1px solid #000;border-right:3px solid #000;overflow:hidden"></div>
<div class="a" style="left:0;top:137px;width:1003px;height:530px;overflow:hidden"><div class="a" style="left:0;top:-137px;width:1003px;height:768px">
<div class="a" style="left:224px;top:147px;width:636px;height:1px;background:#b4b4b4"></div>
<div class="a" style="left:224px;top:169px;width:636px;height:1px;background:#b4b4b4"></div>
<div class="a" style="left:360px;top:136px;width:1px;height:54px;background:#b4b4b4"></div>
<div class="a" style="left:422px;top:136px;width:1px;height:54px;background:#b4b4b4"></div>
<div class="a" style="left:485px;top:136px;width:1px;height:54px;background:#b4b4b4"></div>
<div class="a" style="left:547px;top:136px;width:1px;height:54px;background:#b4b4b4"></div>
<div class="a" style="left:610px;top:136px;width:1px;height:54px;background:#b4b4b4"></div>
<div class="a" style="left:672px;top:136px;width:1px;height:54px;background:#b4b4b4"></div>
<div class="a" style="left:735px;top:136px;width:1px;height:54px;background:#b4b4b4"></div>
<div class="a" style="left:797px;top:136px;width:1px;height:54px;background:#b4b4b4"></div>
<div class="a" style="left:222px;top:136px;width:2px;height:56px;background:#000"></div>
<div class="a" style="left:297px;top:136px;width:2px;height:54px;background:#000"></div>
<div class="a" style="left:860px;top:136px;width:2px;height:56px;background:#000"></div>
<div class="a" style="left:222px;top:190px;width:640px;height:2px;background:#000"></div>
<div class="t ser b" style="top:129px;font-size:17.33px;left:-139.5px;width:800px;text-align:center;"><span style="display:inline-block;transform:scaleX(1.08)">АВ</span></div>
<div class="t ser b" style="top:149px;font-size:17.33px;left:-139.5px;width:800px;text-align:center;"><span style="display:inline-block;transform:scaleX(1.08)">ОВ</span></div>
<div class="t ser b" style="top:172px;font-size:17.33px;left:-139.5px;width:800px;text-align:center;"><span style="display:inline-block;transform:scaleX(1.08)">Ст.,руб</span></div>
<div class="t ser" style="top:128px;font-size:17.7px;left:-71.5px;width:800px;text-align:center;">0,22</div>
<div class="t ser" style="top:148.5px;font-size:17.7px;left:-71.5px;width:800px;text-align:center;">9,9</div>
<div class="t ser b" style="top:170.5px;font-size:17.33px;letter-spacing:0.7px;left:-71.5px;width:800px;text-align:center;"><span style="margin-right:-0.7px">2692</span></div>
<div class="t ser" style="top:128px;font-size:17.7px;left:-9.0px;width:800px;text-align:center;">0,24</div>
<div class="t ser" style="top:148.5px;font-size:17.7px;left:-9.0px;width:800px;text-align:center;">9,8</div>
<div class="t ser b" style="top:170.5px;font-size:17.33px;letter-spacing:0.7px;left:-9.0px;width:800px;text-align:center;"><span style="margin-right:-0.7px">2949</span></div>
<div class="t ser" style="top:128px;font-size:17.7px;left:53.5px;width:800px;text-align:center;">0,21</div>
<div class="t ser" style="top:148.5px;font-size:17.7px;left:53.5px;width:800px;text-align:center;">7,8</div>
<div class="t ser b" style="top:170.5px;font-size:17.33px;letter-spacing:0.7px;left:53.5px;width:800px;text-align:center;"><span style="margin-right:-0.7px">3187</span></div>
<div class="t ser" style="top:128px;font-size:17.7px;left:116.0px;width:800px;text-align:center;">0,23</div>
<div class="t ser" style="top:148.5px;font-size:17.7px;left:116.0px;width:800px;text-align:center;">8,0</div>
<div class="t ser b" style="top:170.5px;font-size:17.33px;letter-spacing:0.7px;left:116.0px;width:800px;text-align:center;"><span style="margin-right:-0.7px">3443</span></div>
<div class="t ser" style="top:128px;font-size:17.7px;left:178.5px;width:800px;text-align:center;">0,24</div>
<div class="t ser" style="top:148.5px;font-size:17.7px;left:178.5px;width:800px;text-align:center;">7,7</div>
<div class="t ser b" style="top:170.5px;font-size:17.33px;letter-spacing:0.7px;left:178.5px;width:800px;text-align:center;"><span style="margin-right:-0.7px">3700</span></div>
<div class="t ser" style="top:128px;font-size:17.7px;left:241.0px;width:800px;text-align:center;">0,26</div>
<div class="t ser" style="top:148.5px;font-size:17.7px;left:241.0px;width:800px;text-align:center;">7,7</div>
<div class="t ser b" style="top:170.5px;font-size:17.33px;letter-spacing:0.7px;left:241.0px;width:800px;text-align:center;"><span style="margin-right:-0.7px">3993</span></div>
<div class="t ser" style="top:128px;font-size:17.7px;left:303.5px;width:800px;text-align:center;">0,28</div>
<div class="t ser" style="top:148.5px;font-size:17.7px;left:303.5px;width:800px;text-align:center;">7,7</div>
<div class="t ser b" style="top:170.5px;font-size:17.33px;letter-spacing:0.7px;left:303.5px;width:800px;text-align:center;"><span style="margin-right:-0.7px">4286</span></div>
<div class="t ser" style="top:128px;font-size:17.7px;left:366.0px;width:800px;text-align:center;">0,30</div>
<div class="t ser" style="top:148.5px;font-size:17.7px;left:366.0px;width:800px;text-align:center;">7,7</div>
<div class="t ser b" style="top:170.5px;font-size:17.33px;letter-spacing:0.7px;left:366.0px;width:800px;text-align:center;"><span style="margin-right:-0.7px">4616</span></div>
<div class="t ser" style="top:128px;font-size:17.7px;left:428.5px;width:800px;text-align:center;">0,30</div>
<div class="t ser" style="top:148.5px;font-size:17.7px;left:428.5px;width:800px;text-align:center;">7,1</div>
<div class="t ser b" style="top:170.5px;font-size:17.33px;letter-spacing:0.7px;left:428.5px;width:800px;text-align:center;"><span style="margin-right:-0.7px">4950</span></div>
<div class="a" style="left:860px;top:193px;width:7px;height:7px;background:#fff;border:1px solid #000"></div>
<div class="t ser b" style="top:212.5px;font-size:21.33px;letter-spacing:0.15px;left:141px;width:800px;text-align:center;"><span style="margin-right:-0.15px">ЕТС бюджетной сферы РФ с 1.10.06 г.</span></div>
<div class="t ser b" style="top:236px;font-size:15.33px;letter-spacing:0.34px;left:141px;width:800px;text-align:center;"><span style="margin-right:-0.34px">(Постановление Правительства Российской Федерации от 30.09.06 № 590)</span></div>
<div class="a" style="left:252px;top:294px;width:627px;height:1px;background:#b4b4b4"></div>
<div class="a" style="left:168px;top:341px;width:711px;height:1px;background:#b4b4b4"></div>
<div class="a" style="left:168px;top:364px;width:711px;height:1px;background:#b4b4b4"></div>
<div class="a" style="left:168px;top:386px;width:711px;height:1px;background:#b4b4b4"></div>
<div class="a" style="left:252px;top:439px;width:627px;height:1px;background:#b4b4b4"></div>
<div class="a" style="left:168px;top:491px;width:711px;height:1px;background:#b4b4b4"></div>
<div class="a" style="left:168px;top:512px;width:711px;height:1px;background:#b4b4b4"></div>
<div class="a" style="left:168px;top:535px;width:711px;height:1px;background:#b4b4b4"></div>
<div class="a" style="left:320px;top:295px;width:1px;height:19px;background:#b4b4b4"></div>
<div class="a" style="left:320px;top:316px;width:1px;height:95px;background:#b4b4b4"></div>
<div class="a" style="left:320px;top:440px;width:1px;height:22px;background:#b4b4b4"></div>
<div class="a" style="left:320px;top:464px;width:1px;height:96px;background:#b4b4b4"></div>
<div class="a" style="left:389px;top:295px;width:1px;height:19px;background:#b4b4b4"></div>
<div class="a" style="left:389px;top:316px;width:1px;height:95px;background:#b4b4b4"></div>
<div class="a" style="left:389px;top:440px;width:1px;height:22px;background:#b4b4b4"></div>
<div class="a" style="left:389px;top:464px;width:1px;height:96px;background:#b4b4b4"></div>
<div class="a" style="left:459px;top:295px;width:1px;height:19px;background:#b4b4b4"></div>
<div class="a" style="left:459px;top:316px;width:1px;height:95px;background:#b4b4b4"></div>
<div class="a" style="left:459px;top:440px;width:1px;height:22px;background:#b4b4b4"></div>
<div class="a" style="left:459px;top:464px;width:1px;height:96px;background:#b4b4b4"></div>
<div class="a" style="left:529px;top:295px;width:1px;height:19px;background:#b4b4b4"></div>
<div class="a" style="left:529px;top:316px;width:1px;height:95px;background:#b4b4b4"></div>
<div class="a" style="left:529px;top:440px;width:1px;height:22px;background:#b4b4b4"></div>
<div class="a" style="left:529px;top:464px;width:1px;height:96px;background:#b4b4b4"></div>
<div class="a" style="left:599px;top:295px;width:1px;height:19px;background:#b4b4b4"></div>
<div class="a" style="left:599px;top:316px;width:1px;height:95px;background:#b4b4b4"></div>
<div class="a" style="left:599px;top:440px;width:1px;height:22px;background:#b4b4b4"></div>
<div class="a" style="left:599px;top:464px;width:1px;height:96px;background:#b4b4b4"></div>
<div class="a" style="left:669px;top:295px;width:1px;height:19px;background:#b4b4b4"></div>
<div class="a" style="left:669px;top:316px;width:1px;height:95px;background:#b4b4b4"></div>
<div class="a" style="left:669px;top:440px;width:1px;height:22px;background:#b4b4b4"></div>
<div class="a" style="left:669px;top:464px;width:1px;height:96px;background:#b4b4b4"></div>
<div class="a" style="left:739px;top:295px;width:1px;height:19px;background:#b4b4b4"></div>
<div class="a" style="left:739px;top:316px;width:1px;height:95px;background:#b4b4b4"></div>
<div class="a" style="left:739px;top:440px;width:1px;height:22px;background:#b4b4b4"></div>
<div class="a" style="left:739px;top:464px;width:1px;height:96px;background:#b4b4b4"></div>
<div class="a" style="left:809px;top:295px;width:1px;height:19px;background:#b4b4b4"></div>
<div class="a" style="left:809px;top:316px;width:1px;height:95px;background:#b4b4b4"></div>
<div class="a" style="left:809px;top:440px;width:1px;height:22px;background:#b4b4b4"></div>
<div class="a" style="left:809px;top:464px;width:1px;height:96px;background:#b4b4b4"></div>
<div class="a" style="left:166px;top:267px;width:2px;height:295px;background:#000"></div>
<div class="a" style="left:250px;top:267px;width:2px;height:295px;background:#000"></div>
<div class="a" style="left:879px;top:267px;width:2px;height:295px;background:#000"></div>
<div class="a" style="left:166px;top:267px;width:715px;height:2px;background:#000"></div>
<div class="a" style="left:166px;top:314px;width:715px;height:2px;background:#000"></div>
<div class="a" style="left:166px;top:411px;width:715px;height:2px;background:#000"></div>
<div class="a" style="left:166px;top:462px;width:715px;height:2px;background:#000"></div>
<div class="a" style="left:166px;top:560px;width:715px;height:2px;background:#000"></div>
<div class="t ser b" style="top:271.5px;font-size:17.33px;left:165px;width:800px;text-align:center;"><span style="display:inline-block;transform:scaleX(1.09)">Разряды оплаты труда</span></div>
<div class="t ser b" style="top:415px;font-size:17.33px;left:165px;width:800px;text-align:center;"><span style="display:inline-block;transform:scaleX(1.09)">Разряды оплаты труда</span></div>
<div class="t ser" style="top:296.3px;font-size:15.33px;left:-114.0px;width:800px;text-align:center;-webkit-text-stroke:.3px #000;">1</div>
<div class="t ser b" style="top:443px;font-size:17.33px;letter-spacing:0.5px;left:-114.0px;width:800px;text-align:center;"><span style="margin-right:-0.5px">10</span></div>
<div class="t ser" style="top:296.3px;font-size:15.33px;left:-45.0px;width:800px;text-align:center;-webkit-text-stroke:.3px #000;">2</div>
<div class="t ser b" style="top:443px;font-size:17.33px;letter-spacing:0.5px;left:-45.0px;width:800px;text-align:center;"><span style="margin-right:-0.5px">11</span></div>
<div class="t ser" style="top:296.3px;font-size:15.33px;left:24.5px;width:800px;text-align:center;-webkit-text-stroke:.3px #000;">3</div>
<div class="t ser b" style="top:443px;font-size:17.33px;letter-spacing:0.5px;left:24.5px;width:800px;text-align:center;"><span style="margin-right:-0.5px">12</span></div>
<div class="t ser" style="top:296.3px;font-size:15.33px;left:94.5px;width:800px;text-align:center;-webkit-text-stroke:.3px #000;">4</div>
<div class="t ser b" style="top:443px;font-size:17.33px;letter-spacing:0.5px;left:94.5px;width:800px;text-align:center;"><span style="margin-right:-0.5px">13</span></div>
<div class="t ser" style="top:296.3px;font-size:15.33px;left:164.5px;width:800px;text-align:center;-webkit-text-stroke:.3px #000;">5</div>
<div class="t ser b" style="top:443px;font-size:17.33px;letter-spacing:0.5px;left:164.5px;width:800px;text-align:center;"><span style="margin-right:-0.5px">14</span></div>
<div class="t ser" style="top:296.3px;font-size:15.33px;left:234.5px;width:800px;text-align:center;-webkit-text-stroke:.3px #000;">6</div>
<div class="t ser b" style="top:443px;font-size:17.33px;letter-spacing:0.5px;left:234.5px;width:800px;text-align:center;"><span style="margin-right:-0.5px">15</span></div>
<div class="t ser" style="top:296.3px;font-size:15.33px;left:304.5px;width:800px;text-align:center;-webkit-text-stroke:.3px #000;">7</div>
<div class="t ser b" style="top:443px;font-size:17.33px;letter-spacing:0.5px;left:304.5px;width:800px;text-align:center;"><span style="margin-right:-0.5px">16</span></div>
<div class="t ser" style="top:296.3px;font-size:15.33px;left:374.5px;width:800px;text-align:center;-webkit-text-stroke:.3px #000;">8</div>
<div class="t ser b" style="top:443px;font-size:17.33px;letter-spacing:0.5px;left:374.5px;width:800px;text-align:center;"><span style="margin-right:-0.5px">17</span></div>
<div class="t ser" style="top:296.3px;font-size:15.33px;left:444.5px;width:800px;text-align:center;-webkit-text-stroke:.3px #000;">9</div>
<div class="t ser b" style="top:443px;font-size:17.33px;letter-spacing:0.5px;left:444.5px;width:800px;text-align:center;"><span style="margin-right:-0.5px">18</span></div>
<div class="t ser b" style="top:318px;font-size:17.33px;left:-192.5px;width:800px;text-align:center;"><span style="display:inline-block;transform:scaleX(1.19)">Кт</span></div>
<div class="t ser b" style="top:343px;font-size:17.33px;left:-192.5px;width:800px;text-align:center;"><span style="display:inline-block;transform:scaleX(1.065)">АВ</span></div>
<div class="t ser b" style="top:366px;font-size:17.33px;left:-192.5px;width:800px;text-align:center;"><span style="display:inline-block;transform:scaleX(1.08)">ОВ, %</span></div>
<div class="t ser b" style="top:388px;font-size:17.33px;left:-192.5px;width:800px;text-align:center;"><span style="display:inline-block;transform:scaleX(1.147)">Ст.,<span style="font-size:13.330px">руб</span></span></div>
<div class="t ser b" style="top:318.5px;font-size:16px;letter-spacing:1.2px;left:-114.0px;width:800px;text-align:center;"><span style="margin-right:-1.2px">1,0</span></div>
<div class="t ser" style="top:344px;font-size:16px;letter-spacing:1.0px;left:-114.0px;width:800px;text-align:center;"><span style="margin-right:-1.0px"></span></div>
<div class="t ser" style="top:367px;font-size:16px;letter-spacing:1.0px;left:-114.0px;width:800px;text-align:center;"><span style="margin-right:-1.0px"></span></div>
<div class="t ser" style="top:387px;font-size:15.33px;letter-spacing:0.3px;left:-114.0px;width:800px;text-align:center;-webkit-text-stroke:.35px #000;"><span style="margin-right:-0.3px">1221,00</span></div>
<div class="t ser b" style="top:318.5px;font-size:16px;letter-spacing:1.2px;left:-45.0px;width:800px;text-align:center;"><span style="margin-right:-1.2px">1,04</span></div>
<div class="t ser" style="top:344px;font-size:16px;letter-spacing:1.0px;left:-45.0px;width:800px;text-align:center;"><span style="margin-right:-1.0px">4</span></div>
<div class="t ser" style="top:367px;font-size:16px;letter-spacing:1.0px;left:-45.0px;width:800px;text-align:center;"><span style="margin-right:-1.0px">4</span></div>
<div class="t ser" style="top:387px;font-size:15.33px;letter-spacing:0.3px;left:-45.0px;width:800px;text-align:center;-webkit-text-stroke:.35px #000;"><span style="margin-right:-0.3px">1269,84</span></div>
<div class="t ser b" style="top:318.5px;font-size:16px;letter-spacing:1.2px;left:24.5px;width:800px;text-align:center;"><span style="margin-right:-1.2px">1,09</span></div>
<div class="t ser" style="top:344px;font-size:16px;letter-spacing:1.0px;left:24.5px;width:800px;text-align:center;"><span style="margin-right:-1.0px">5</span></div>
<div class="t ser" style="top:367px;font-size:16px;letter-spacing:1.0px;left:24.5px;width:800px;text-align:center;"><span style="margin-right:-1.0px">4,81</span></div>
<div class="t ser" style="top:387px;font-size:15.33px;letter-spacing:0.3px;left:24.5px;width:800px;text-align:center;-webkit-text-stroke:.35px #000;"><span style="margin-right:-0.3px">1330,89</span></div>
<div class="t ser b" style="top:318.5px;font-size:16px;letter-spacing:1.2px;left:94.5px;width:800px;text-align:center;"><span style="margin-right:-1.2px">1,142</span></div>
<div class="t ser" style="top:344px;font-size:16px;letter-spacing:1.0px;left:94.5px;width:800px;text-align:center;"><span style="margin-right:-1.0px">5,2</span></div>
<div class="t ser" style="top:367px;font-size:16px;letter-spacing:1.0px;left:94.5px;width:800px;text-align:center;"><span style="margin-right:-1.0px">4,77</span></div>
<div class="t ser" style="top:387px;font-size:15.33px;letter-spacing:0.3px;left:94.5px;width:800px;text-align:center;-webkit-text-stroke:.35px #000;"><span style="margin-right:-0.3px">1394,38</span></div>
<div class="t ser b" style="top:318.5px;font-size:16px;letter-spacing:1.2px;left:164.5px;width:800px;text-align:center;"><span style="margin-right:-1.2px">1,268</span></div>
<div class="t ser" style="top:344px;font-size:16px;letter-spacing:1.0px;left:164.5px;width:800px;text-align:center;"><span style="margin-right:-1.0px">12,6</span></div>
<div class="t ser" style="top:367px;font-size:16px;letter-spacing:1.0px;left:164.5px;width:800px;text-align:center;"><span style="margin-right:-1.0px">11,03</span></div>
<div class="t ser" style="top:387px;font-size:15.33px;letter-spacing:0.3px;left:164.5px;width:800px;text-align:center;-webkit-text-stroke:.35px #000;"><span style="margin-right:-0.3px">1548,23</span></div>
<div class="t ser b" style="top:318.5px;font-size:16px;letter-spacing:1.2px;left:234.5px;width:800px;text-align:center;"><span style="margin-right:-1.2px">1,407</span></div>
<div class="t ser" style="top:344px;font-size:16px;letter-spacing:1.0px;left:234.5px;width:800px;text-align:center;"><span style="margin-right:-1.0px">13,9</span></div>
<div class="t ser" style="top:367px;font-size:16px;letter-spacing:1.0px;left:234.5px;width:800px;text-align:center;"><span style="margin-right:-1.0px">10,96</span></div>
<div class="t ser" style="top:387px;font-size:15.33px;letter-spacing:0.3px;left:234.5px;width:800px;text-align:center;-webkit-text-stroke:.35px #000;"><span style="margin-right:-0.3px">1717,95</span></div>
<div class="t ser b" style="top:318.5px;font-size:16px;letter-spacing:1.2px;left:304.5px;width:800px;text-align:center;"><span style="margin-right:-1.2px">1,546</span></div>
<div class="t ser" style="top:344px;font-size:16px;letter-spacing:1.0px;left:304.5px;width:800px;text-align:center;"><span style="margin-right:-1.0px">13,9</span></div>
<div class="t ser" style="top:367px;font-size:16px;letter-spacing:1.0px;left:304.5px;width:800px;text-align:center;"><span style="margin-right:-1.0px">9,88</span></div>
<div class="t ser" style="top:387px;font-size:15.33px;letter-spacing:0.3px;left:304.5px;width:800px;text-align:center;-webkit-text-stroke:.35px #000;"><span style="margin-right:-0.3px">1887,67</span></div>
<div class="t ser b" style="top:318.5px;font-size:16px;letter-spacing:1.2px;left:374.5px;width:800px;text-align:center;"><span style="margin-right:-1.2px">1,699</span></div>
<div class="t ser" style="top:344px;font-size:16px;letter-spacing:1.0px;left:374.5px;width:800px;text-align:center;"><span style="margin-right:-1.0px">15,3</span></div>
<div class="t ser" style="top:367px;font-size:16px;letter-spacing:1.0px;left:374.5px;width:800px;text-align:center;"><span style="margin-right:-1.0px">9,9</span></div>
<div class="t ser" style="top:387px;font-size:15.33px;letter-spacing:0.3px;left:374.5px;width:800px;text-align:center;-webkit-text-stroke:.35px #000;"><span style="margin-right:-0.3px">2074,48</span></div>
<div class="t ser b" style="top:318.5px;font-size:16px;letter-spacing:1.2px;left:444.5px;width:800px;text-align:center;"><span style="margin-right:-1.2px">1,866</span></div>
<div class="t ser" style="top:344px;font-size:16px;letter-spacing:1.0px;left:444.5px;width:800px;text-align:center;"><span style="margin-right:-1.0px">16,7</span></div>
<div class="t ser" style="top:367px;font-size:16px;letter-spacing:1.0px;left:444.5px;width:800px;text-align:center;"><span style="margin-right:-1.0px">9,83</span></div>
<div class="t ser" style="top:387px;font-size:15.33px;letter-spacing:0.3px;left:444.5px;width:800px;text-align:center;-webkit-text-stroke:.35px #000;"><span style="margin-right:-0.3px">2278,39</span></div>
<div class="t ser b" style="top:466px;font-size:17.33px;left:-192.5px;width:800px;text-align:center;"><span style="display:inline-block;transform:scaleX(1.19)">Кт</span></div>
<div class="t ser b" style="top:492px;font-size:17.33px;left:-192.5px;width:800px;text-align:center;"><span style="display:inline-block;transform:scaleX(1.065)">АВ</span></div>
<div class="t ser b" style="top:514px;font-size:17.33px;left:-192.5px;width:800px;text-align:center;"><span style="display:inline-block;transform:scaleX(1.08)">ОВ, %</span></div>
<div class="t ser b" style="top:537px;font-size:17.33px;left:-192.5px;width:800px;text-align:center;"><span style="display:inline-block;transform:scaleX(1.147)">Ст.,<span style="font-size:13.330px">руб</span></span></div>
<div class="t ser b" style="top:466.5px;font-size:16px;letter-spacing:1.2px;left:-114.0px;width:800px;text-align:center;"><span style="margin-right:-1.2px">2,047</span></div>
<div class="t ser" style="top:493px;font-size:16px;letter-spacing:1.0px;left:-114.0px;width:800px;text-align:center;"><span style="margin-right:-1.0px">18,1</span></div>
<div class="t ser" style="top:515px;font-size:16px;letter-spacing:1.0px;left:-114.0px;width:800px;text-align:center;"><span style="margin-right:-1.0px">9,7</span></div>
<div class="t ser" style="top:536px;font-size:15.33px;letter-spacing:0.3px;left:-114.0px;width:800px;text-align:center;-webkit-text-stroke:.35px #000;"><span style="margin-right:-0.3px">2499,39</span></div>
<div class="t ser b" style="top:466.5px;font-size:16px;letter-spacing:1.2px;left:-45.0px;width:800px;text-align:center;"><span style="margin-right:-1.2px">2,242</span></div>
<div class="t ser" style="top:493px;font-size:16px;letter-spacing:1.0px;left:-45.0px;width:800px;text-align:center;"><span style="margin-right:-1.0px">19,5</span></div>
<div class="t ser" style="top:515px;font-size:16px;letter-spacing:1.0px;left:-45.0px;width:800px;text-align:center;"><span style="margin-right:-1.0px">9,53</span></div>
<div class="t ser" style="top:536px;font-size:15.33px;letter-spacing:0.3px;left:-45.0px;width:800px;text-align:center;-webkit-text-stroke:.35px #000;"><span style="margin-right:-0.3px">2737,48</span></div>
<div class="t ser b" style="top:466.5px;font-size:16px;letter-spacing:1.2px;left:24.5px;width:800px;text-align:center;"><span style="margin-right:-1.2px">2,423</span></div>
<div class="t ser" style="top:493px;font-size:16px;letter-spacing:1.0px;left:24.5px;width:800px;text-align:center;"><span style="margin-right:-1.0px">18,1</span></div>
<div class="t ser" style="top:515px;font-size:16px;letter-spacing:1.0px;left:24.5px;width:800px;text-align:center;"><span style="margin-right:-1.0px">8,07</span></div>
<div class="t ser" style="top:536px;font-size:15.33px;letter-spacing:0.3px;left:24.5px;width:800px;text-align:center;-webkit-text-stroke:.35px #000;"><span style="margin-right:-0.3px">2958,48</span></div>
<div class="t ser b" style="top:466.5px;font-size:16px;letter-spacing:1.2px;left:94.5px;width:800px;text-align:center;"><span style="margin-right:-1.2px">2,618</span></div>
<div class="t ser" style="top:493px;font-size:16px;letter-spacing:1.0px;left:94.5px;width:800px;text-align:center;"><span style="margin-right:-1.0px">19,5</span></div>
<div class="t ser" style="top:515px;font-size:16px;letter-spacing:1.0px;left:94.5px;width:800px;text-align:center;"><span style="margin-right:-1.0px">8,05</span></div>
<div class="t ser" style="top:536px;font-size:15.33px;letter-spacing:0.3px;left:94.5px;width:800px;text-align:center;-webkit-text-stroke:.35px #000;"><span style="margin-right:-0.3px">3196,58</span></div>
<div class="t ser b" style="top:466.5px;font-size:16px;letter-spacing:1.2px;left:164.5px;width:800px;text-align:center;"><span style="margin-right:-1.2px">2,813</span></div>
<div class="t ser" style="top:493px;font-size:16px;letter-spacing:1.0px;left:164.5px;width:800px;text-align:center;"><span style="margin-right:-1.0px">19,5</span></div>
<div class="t ser" style="top:515px;font-size:16px;letter-spacing:1.0px;left:164.5px;width:800px;text-align:center;"><span style="margin-right:-1.0px">7,45</span></div>
<div class="t ser" style="top:536px;font-size:15.33px;letter-spacing:0.3px;left:164.5px;width:800px;text-align:center;-webkit-text-stroke:.35px #000;"><span style="margin-right:-0.3px">3434,67</span></div>
<div class="t ser b" style="top:466.5px;font-size:16px;letter-spacing:1.2px;left:234.5px;width:800px;text-align:center;"><span style="margin-right:-1.2px">3,036</span></div>
<div class="t ser" style="top:493px;font-size:16px;letter-spacing:1.0px;left:234.5px;width:800px;text-align:center;"><span style="margin-right:-1.0px">22,3</span></div>
<div class="t ser" style="top:515px;font-size:16px;letter-spacing:1.0px;left:234.5px;width:800px;text-align:center;"><span style="margin-right:-1.0px">7,93</span></div>
<div class="t ser" style="top:536px;font-size:15.33px;letter-spacing:0.3px;left:234.5px;width:800px;text-align:center;-webkit-text-stroke:.35px #000;"><span style="margin-right:-0.3px">3706,96</span></div>
<div class="t ser b" style="top:466.5px;font-size:16px;letter-spacing:1.2px;left:304.5px;width:800px;text-align:center;"><span style="margin-right:-1.2px">3,259</span></div>
<div class="t ser" style="top:493px;font-size:16px;letter-spacing:1.0px;left:304.5px;width:800px;text-align:center;"><span style="margin-right:-1.0px">22,3</span></div>
<div class="t ser" style="top:515px;font-size:16px;letter-spacing:1.0px;left:304.5px;width:800px;text-align:center;"><span style="margin-right:-1.0px">7,35</span></div>
<div class="t ser" style="top:536px;font-size:15.33px;letter-spacing:0.3px;left:304.5px;width:800px;text-align:center;-webkit-text-stroke:.35px #000;"><span style="margin-right:-0.3px">3979,24</span></div>
<div class="t ser b" style="top:466.5px;font-size:16px;letter-spacing:1.2px;left:374.5px;width:800px;text-align:center;"><span style="margin-right:-1.2px">3,51</span></div>
<div class="t ser" style="top:493px;font-size:16px;letter-spacing:1.0px;left:374.5px;width:800px;text-align:center;"><span style="margin-right:-1.0px">25,1</span></div>
<div class="t ser" style="top:515px;font-size:16px;letter-spacing:1.0px;left:374.5px;width:800px;text-align:center;"><span style="margin-right:-1.0px">7,70</span></div>
<div class="t ser" style="top:536px;font-size:15.33px;letter-spacing:0.3px;left:374.5px;width:800px;text-align:center;-webkit-text-stroke:.35px #000;"><span style="margin-right:-0.3px">4285,71</span></div>
<div class="t ser b" style="top:466.5px;font-size:16px;letter-spacing:1.2px;left:444.5px;width:800px;text-align:center;"><span style="margin-right:-1.2px">4,5</span></div>
<div class="t ser" style="top:493px;font-size:16px;letter-spacing:1.0px;left:444.5px;width:800px;text-align:center;"><span style="margin-right:-1.0px">99</span></div>
<div class="t ser" style="top:515px;font-size:16px;letter-spacing:1.0px;left:444.5px;width:800px;text-align:center;"><span style="margin-right:-1.0px">28,2</span></div>
<div class="t ser" style="top:536px;font-size:15.33px;letter-spacing:0.3px;left:444.5px;width:800px;text-align:center;-webkit-text-stroke:.35px #000;"><span style="margin-right:-0.3px">5494,50</span></div>
<div class="a" style="left:222px;top:619px;width:645px;height:1px;background:#000"></div>
<div class="a" style="left:222px;top:619px;width:1px;height:48px;background:#000"></div>
<div class="a" style="left:250px;top:619px;width:1px;height:48px;background:#000"></div>
<div class="a" style="left:277px;top:619px;width:1px;height:48px;background:#000"></div>
<div class="a" style="left:308px;top:619px;width:1px;height:48px;background:#000"></div>
<div class="a" style="left:339px;top:619px;width:1px;height:48px;background:#000"></div>
<div class="a" style="left:375px;top:619px;width:1px;height:48px;background:#000"></div>
<div class="a" style="left:411px;top:619px;width:1px;height:48px;background:#000"></div>
<div class="a" style="left:446px;top:619px;width:1px;height:48px;background:#000"></div>
<div class="a" style="left:482px;top:619px;width:1px;height:48px;background:#000"></div>
<div class="a" style="left:518px;top:619px;width:1px;height:48px;background:#000"></div>
<div class="a" style="left:554px;top:619px;width:1px;height:48px;background:#000"></div>
<div class="a" style="left:589px;top:619px;width:1px;height:48px;background:#000"></div>
<div class="a" style="left:625px;top:619px;width:1px;height:48px;background:#000"></div>
<div class="a" style="left:661px;top:619px;width:1px;height:48px;background:#000"></div>
<div class="a" style="left:697px;top:619px;width:1px;height:48px;background:#000"></div>
<div class="a" style="left:732px;top:619px;width:1px;height:48px;background:#000"></div>
<div class="a" style="left:768px;top:619px;width:1px;height:48px;background:#000"></div>
<div class="a" style="left:804px;top:619px;width:1px;height:48px;background:#000"></div>
<div class="a" style="left:835px;top:619px;width:1px;height:48px;background:#000"></div>
<div class="a" style="left:866px;top:619px;width:1px;height:48px;background:#000"></div>
<div class="t ser b" style="top:621px;font-size:16px;left:-136.0px;width:800px;text-align:center;">1</div>
<div class="t ser b" style="top:621px;font-size:16px;left:-107.0px;width:800px;text-align:center;">2</div>
<div class="t ser b" style="top:621px;font-size:16px;left:-76.0px;width:800px;text-align:center;">3</div>
<div class="t ser b" style="top:621px;font-size:16px;left:-42.5px;width:800px;text-align:center;">4</div>
<div class="t ser b" style="top:621px;font-size:16px;left:-6.5px;width:800px;text-align:center;">5</div>
<div class="t ser b" style="top:621px;font-size:16px;left:29.0px;width:800px;text-align:center;">6</div>
<div class="t ser b" style="top:621px;font-size:16px;left:64.5px;width:800px;text-align:center;">7</div>
<div class="t ser b" style="top:621px;font-size:16px;left:100.5px;width:800px;text-align:center;">8</div>
<div class="t ser b" style="top:621px;font-size:16px;left:136.5px;width:800px;text-align:center;">9</div>
<div class="t ser b" style="top:621px;font-size:16px;left:172.0px;width:800px;text-align:center;">10</div>
<div class="t ser b" style="top:621px;font-size:16px;left:207.5px;width:800px;text-align:center;">11</div>
<div class="t ser b" style="top:621px;font-size:16px;left:243.5px;width:800px;text-align:center;">12</div>
<div class="t ser b" style="top:621px;font-size:16px;left:279.5px;width:800px;text-align:center;">13</div>
<div class="t ser b" style="top:621px;font-size:16px;left:315.0px;width:800px;text-align:center;">14</div>
<div class="t ser b" style="top:621px;font-size:16px;left:350.5px;width:800px;text-align:center;">15</div>
<div class="t ser b" style="top:621px;font-size:16px;left:386.5px;width:800px;text-align:center;">16</div>
<div class="t ser b" style="top:621px;font-size:16px;left:420.0px;width:800px;text-align:center;">17</div>
<div class="t ser b" style="top:621px;font-size:16px;left:451.0px;width:800px;text-align:center;">18</div>
</div></div>
<div class="a" style="left:1003px;top:113px;width:21px;height:574px;background:#ece9d8"></div>
<div class="a" style="left:1003px;top:119px;width:19px;height:490px;background:linear-gradient(to right,#f3f1ec,#fefefb)"></div>
<div class="a" style="left:1003px;top:113px;width:19px;height:6px;background:#ece9d8;border:1px solid;border-color:#fff #000 #000 #fff"></div>
<div class="a" style="left:1023px;top:111px;width:1px;height:604px;background:#fff"></div>
<div class="a" style="left:1004px;top:120px;width:17px;height:18px;border:1px solid #fff;border-radius:3px;background:linear-gradient(135deg,#cbdbfc,#b4c8f6);box-shadow:inset -1px -1px 0 #a9bdee,0 1px 1px #7a9ad8"></div>
<svg class="a" style="left:0;top:0" width="1024" height="768"><path d="M1008.5 131.0L1012.5 127.0L1016.5 131.0" stroke="#4d6185" stroke-width="2.200" fill="none"/></svg>
<div class="a" style="left:1004px;top:592px;width:17px;height:18px;border:1px solid #fff;border-radius:3px;background:linear-gradient(135deg,#cbdbfc,#b4c8f6);box-shadow:inset -1px -1px 0 #a9bdee,0 1px 1px #7a9ad8"></div>
<svg class="a" style="left:0;top:0" width="1024" height="768"><path d="M1008.5 599.0L1012.5 603.0L1016.5 599.0" stroke="#4d6185" stroke-width="2.200" fill="none"/></svg>
<div class="a" style="left:1004px;top:197px;width:17px;height:70px;border:1px solid #fff;border-radius:3px;background:linear-gradient(to right,#c9d9fc,#b7cbf8);box-shadow:inset -1px -1px 0 #9db3e8"></div>
<div class="a" style="left:1009px;top:227px;width:7px;height:8px;background:repeating-linear-gradient(to bottom,#eef4fe 0,#eef4fe 1px,#8cb0f8 1px,#8cb0f8 2px)"></div>
<svg class="a" style="left:1004px;top:610px" width="18" height="56" viewBox="0 0 18 56"><path d="M4.500 12.500H10.500M7.500 6.500L10.300 9.500H4.700ZM7.500 9L10.300 12H4.700Z" fill="#000" stroke="#000" stroke-width=".5"/><circle cx="7.500" cy="27.500" r="3" fill="#a0a0a0" stroke="#333" stroke-width="1"/><circle cx="6.800" cy="26.800" r="1" fill="#ddd"/><path d="M4.500 43.500H10.500M7.500 49.500L10.300 46.500H4.700ZM7.500 47L10.300 44H4.700Z" fill="#000" stroke="#000" stroke-width=".5"/></svg>
<div class="a" style="left:0;top:667px;width:1003px;height:20px;background:#ece9d8"></div>
<div class="a" style="left:96px;top:668px;width:907px;height:18px;background:linear-gradient(to bottom,#f3f1ec,#fefefb)"></div>
<svg class="a" style="left:4px;top:669px" width="92" height="16" viewBox="0 0 92 16"><path d="M3 3.500H11M3 5.500H11M3 7.500H11M3 9.500H11" stroke="#000" stroke-width="1"/><rect x="22.500" y="3.500" width="6" height="5" fill="#fff" stroke="#000" stroke-width="1.200"/><circle cx="28" cy="8" r="2.200" fill="#2a6ac8" stroke="#123" stroke-width=".5"/><path d="M27 7.500L28.500 9" stroke="#3fc83f" stroke-width="1"/><path d="M60 3.500H61.500M63 3.500H68M62 5.500H63.500M65 5.500H68M62 7.500H63.500M65 7.500H68M60 9.500H61.500M63 9.500H68" stroke="#000" stroke-width="1"/><path d="M78.500 2.500C80 2 81.500 2.500 82.500 3.500C83.500 2.500 85 2 86.500 2.500V9.500C85 9 83.500 9.500 82.500 10.500C81.500 9.500 80 9 78.500 9.500Z" fill="#fff" stroke="#000" stroke-width="1"/><path d="M82.500 3.500V11.500M81.300 10.300L82.500 11.800L83.700 10.300" stroke="#000" stroke-width=".9" fill="none"/><path d="M79.800 4.500H81.300M79.800 6.500H81.300M83.800 4.500H85.300M83.800 6.500H85.300" stroke="#000" stroke-width=".7"/></svg>
<div class="a" style="left:40px;top:667px;width:19px;height:19px;background:#ffc47a;border:1px solid #000080"></div>
<svg class="a" style="left:42px;top:669px" width="16" height="16" viewBox="0 0 16 16"><rect x="3.500" y="3.500" width="7" height="6" fill="#fff" stroke="#000" stroke-width="1.200"/><path d="M5 6.500H9" stroke="#000"/></svg>
<div class="a" style="left:98px;top:668px;width:17px;height:17px;border:1px solid #fff;border-radius:3px;background:linear-gradient(135deg,#cbdbfc,#b4c8f6);box-shadow:inset -1px -1px 0 #a9bdee,0 1px 1px #7a9ad8"></div>
<svg class="a" style="left:0;top:0" width="1024" height="768"><path d="M108.5 672.5L104.5 676.5L108.5 680.5" stroke="#4d6185" stroke-width="2.200" fill="none"/></svg>
<div class="a" style="left:985px;top:668px;width:17px;height:17px;border:1px solid #fff;border-radius:3px;background:linear-gradient(135deg,#cbdbfc,#b4c8f6);box-shadow:inset -1px -1px 0 #a9bdee,0 1px 1px #7a9ad8"></div>
<svg class="a" style="left:0;top:0" width="1024" height="768"><path d="M991.5 672.5L995.5 676.5L991.5 680.5" stroke="#4d6185" stroke-width="2.200" fill="none"/></svg>
<div class="a" style="left:117px;top:668px;width:866px;height:17px;border:1px solid #fff;border-radius:3px;background:linear-gradient(to bottom,#c9d9fc,#b7cbf8);box-shadow:inset -1px -1px 0 #9db3e8"></div>
<div class="a" style="left:545px;top:673px;width:8px;height:7px;background:repeating-linear-gradient(to right,#eef4fe 0,#eef4fe 1px,#8cb0f8 1px,#8cb0f8 2px)"></div>
<div class="a" style="left:0;top:667px;width:1px;height:20px;background:#aca899"></div><div class="a" style="left:1px;top:667px;width:1px;height:19px;background:#716f64"></div>
<div class="a" style="left:0;top:687px;width:1024px;height:28px;background:linear-gradient(to right,#9ebef5 0,#c3daf9 60%,#c4dafa 100%)"></div>
<div class="a" style="left:0;top:687px;width:1024px;height:1px;background:#fff"></div>
<div class="tb" style="left:3px;top:689px;width:634px;height:25px"></div>
<div class="tbend" style="left:636px;top:689px;width:12px;height:24px"></div>
<svg class="a" style="left:639px;top:703px" width="8" height="8" shape-rendering="crispEdges"><g fill="#000"><rect x="1" y="2" width="5" height="1"/><rect x="1" y="5" width="5" height="1"/><rect x="2" y="6" width="3" height="1"/><rect x="3" y="7" width="1" height="1"/></g><g fill="#fff"><rect x="0" y="1" width="5" height="1"/><rect x="0" y="4" width="5" height="1"/><rect x="1" y="5" width="3" height="1"/><rect x="2" y="6" width="1" height="1"/></g></svg>
<div class="a" style="left:7px;top:694px;width:2px;height:14px;background:repeating-linear-gradient(to bottom,#fff 0,#fff 2px,transparent 2px,transparent 4px)"></div>
<div class="a" style="left:6px;top:693px;width:2px;height:14px;background:repeating-linear-gradient(to bottom,#27408b 0,#27408b 2px,transparent 2px,transparent 4px)"></div>
<div class="t" style="left:12.500px;top:696px;font-size:12.400px"><u>Р</u>исование</div>
<svg class="a" style="left:77px;top:700px" width="5" height="3" fill="#000" shape-rendering="crispEdges"><rect x="0.0" y="0" width="5" height="1"/><rect x="1.0" y="1" width="3" height="1"/><rect x="2.0" y="2" width="1" height="1"/></svg>
<svg class="ic" style="left:91px;top:693px;" viewBox="0 0 16 16"><path d="M3.500 .8V13L6.500 10L8.500 15L10.500 14L8.500 9.500H12.500Z" fill="#fff" stroke="#5a6478" stroke-width="1"/></svg>
<div class="sep" style="left:113px;top:693px;height:16px"></div>
<div class="t" style="left:120px;top:696px;font-size:12.400px">Автофи<u>г</u>уры</div>
<svg class="a" style="left:195px;top:700px" width="5" height="3" fill="#000" shape-rendering="crispEdges"><rect x="0.0" y="0" width="5" height="1"/><rect x="1.0" y="1" width="3" height="1"/><rect x="2.0" y="2" width="1" height="1"/></svg>
<svg class="ic" style="left:207px;top:693px;" viewBox="0 0 16 16"><path d="M2 2L14 14" stroke="#000" stroke-width="1.200"/></svg>
<svg class="ic" style="left:231px;top:693px;" viewBox="0 0 16 16"><path d="M2 2L13 13" stroke="#000" stroke-width="1.200"/><path d="M14.500 14.500L8.500 12L12 8.500Z" fill="#000"/></svg>
<svg class="ic" style="left:254px;top:693px;" viewBox="0 0 16 16"><rect x=".7" y="2.700" width="15" height="11" fill="none" stroke="#000" stroke-width="1.300"/></svg>
<svg class="ic" style="left:277px;top:693px;" viewBox="0 0 16 16"><ellipse cx="8" cy="8" rx="7.500" ry="5.500" fill="none" stroke="#000" stroke-width="1.200"/></svg>
<svg class="ic" style="left:300px;top:693px;" viewBox="0 0 16 16"><rect x=".5" y="1.500" width="15" height="12" fill="#fff" stroke="#6a7a98"/><text x="1.500" y="8" font-family="Liberation Sans,sans-serif" font-weight="bold" font-size="7" fill="#000">A</text><path d="M8 4H14M8 6.500H14M2 9H14M2 11.500H14" stroke="#8a94a8" stroke-width=".8"/></svg>
<svg class="ic" style="left:323px;top:693px;" viewBox="0 0 16 16"><path d="M.5 10.500L10.500 1H14V14.500H10V11.500H5.500L3.500 13Z" fill="#3a78e0" stroke="#1a3a98" stroke-width=".7"/><path d="M7 8.500H10V5.500Z" fill="#c8dcf8"/><path d="M14 1L15 2V15H11L10 14.500" fill="#1a48b0" stroke="#1a3a98" stroke-width=".5"/></svg>
<svg class="ic" style="left:345px;top:693px;" viewBox="0 0 16 16"><path d="M5 3C6.500 1.500 9.500 1.500 11 3M11 3L9.200 2.800M11 3L10.800 1.200M13 9C13 10.500 12 12 10.500 13M10.500 13L12.300 12.600M10.500 13L10.800 11.200M5.500 13C4 12 3 10.500 3 9M3 9L2.200 10.600M3 9L4.600 9.800" stroke="#4a5a7a" stroke-width="1" fill="none"/><circle cx="2.600" cy="5.500" r="1.800" fill="#e8d83a" stroke="#8a7a1a" stroke-width=".5"/><circle cx="12.600" cy="5.500" r="1.800" fill="#e84a2a" stroke="#8a2a1a" stroke-width=".5"/><circle cx="8" cy="13.500" r="1.800" fill="#8a7ae8" stroke="#3a2a98" stroke-width=".5"/></svg>
<svg class="ic" style="left:370px;top:693px;" viewBox="0 0 16 16"><rect x=".5" y="1.500" width="13" height="13" fill="#fff" stroke="#3a5aa8"/><circle cx="7" cy="6" r="3" fill="#5a5a5a"/><path d="M2 14C2 9.500 12 9.500 12 14Z" fill="#e87a2a"/><circle cx="7" cy="7" r="1.800" fill="#f4d8b8"/></svg>
<svg class="ic" style="left:393px;top:693px;" viewBox="0 0 16 16"><rect x=".5" y="1.500" width="13" height="13" fill="#fff" stroke="#3a5aa8"/><path d="M1 14L5.500 7.500L8.500 11L10.500 9L13 14Z" fill="#8a98b8" stroke="#4a5a7a" stroke-width=".6"/><circle cx="10" cy="5" r="1.800" fill="#e87a2a"/></svg>
<div class="sep" style="left:414px;top:693px;height:16px"></div>
<svg class="ic" style="left:421px;top:693px;" viewBox="0 0 16 16"><path d="M3 7L8 2L13 7L8 11.500Z" fill="#f4f4f8" stroke="#4a5a7a"/><path d="M6 1C6 4 7 5 8 5.500" stroke="#4a5a7a" fill="none"/><path d="M13 7C14.500 8.500 15 10 14 11C13 10 13 8.500 13 7Z" fill="#3a66d8"/><rect x="0" y="12.500" width="16" height="3.500" fill="#ffff00"/></svg>
<svg class="a" style="left:443px;top:700px" width="5" height="3" fill="#000" shape-rendering="crispEdges"><rect x="0.0" y="0" width="5" height="1"/><rect x="1.0" y="1" width="3" height="1"/><rect x="2.0" y="2" width="1" height="1"/></svg>
<svg class="ic" style="left:455px;top:693px;" viewBox="0 0 16 16"><path d="M2 10C4 10 5 8 7 8L9 10C8 11 5 12 2 10Z" fill="#3a66d8"/><path d="M7 8L13 1L15 2.500L9 10Z" fill="#e8b04a" stroke="#8a5a1a" stroke-width=".6"/><rect x="0" y="12.500" width="16" height="3.500" fill="#1a3af0"/></svg>
<svg class="a" style="left:477px;top:700px" width="5" height="3" fill="#000" shape-rendering="crispEdges"><rect x="0.0" y="0" width="5" height="1"/><rect x="1.0" y="1" width="3" height="1"/><rect x="2.0" y="2" width="1" height="1"/></svg>
<svg class="ic" style="left:489px;top:693px;" viewBox="0 0 16 16"><text x="8" y="11.300" text-anchor="middle" font-family="Liberation Serif,serif" font-weight="bold" font-size="16.500" fill="#33406e">A</text><rect x="0" y="12.500" width="16" height="3.500" fill="#f01818"/></svg>
<svg class="a" style="left:511px;top:700px" width="5" height="3" fill="#000" shape-rendering="crispEdges"><rect x="0.0" y="0" width="5" height="1"/><rect x="1.0" y="1" width="3" height="1"/><rect x="2.0" y="2" width="1" height="1"/></svg>
<svg class="ic" style="left:523px;top:693px;" viewBox="0 0 16 16"><path d="M0 3H16" stroke="#000" stroke-width="1.500"/><path d="M0 7.500H16" stroke="#000" stroke-width="2.500"/><path d="M0 12.500H16" stroke="#000" stroke-width="3.500"/></svg>
<svg class="ic" style="left:546px;top:693px;" viewBox="0 0 16 16"><path d="M0 3H16" stroke="#000" stroke-width="1.200" stroke-dasharray="1 1"/><path d="M0 7H16" stroke="#000" stroke-width="1.200" stroke-dasharray="2 1"/><path d="M0 11H16" stroke="#000" stroke-width="1.200" stroke-dasharray="3 1"/><path d="M0 14.500H16" stroke="#000" stroke-width="1.200"/></svg>
<svg class="ic" style="left:569px;top:693px;" viewBox="0 0 16 16"><path d="M0 3H15M15 3L11.500 1M15 3L11.500 5M1 8H15M1 8L4.500 6M1 8L4.500 10M1 13H15M1 13L4.500 11M1 13L4.500 15M15 13L11.500 11M15 13L11.500 15" stroke="#000" stroke-width="1.200" fill="none"/></svg>
<svg class="ic" style="left:591px;top:693px;" viewBox="0 0 16 16"><rect x="3.500" y="3.500" width="11" height="11" fill="#5a6a5a"/><rect x="1" y="1" width="11" height="11" fill="#6ab85a" stroke="#3a7a2a" stroke-width=".8"/><rect x="2" y="2" width="5" height="5" fill="#8ad07a" opacity=".6"/></svg>
<svg class="ic" style="left:615px;top:693px;" viewBox="0 0 16 16"><path d="M1 5L5 1H15V11L11 15H1Z" fill="#4a9a3a" stroke="#2a6a1a" stroke-width=".8"/><rect x="1" y="5" width="10" height="10" fill="#7ac86a" stroke="#2a6a1a" stroke-width=".8"/><path d="M1 5L5 1H15L11 5Z" fill="#a8e098" stroke="#2a6a1a" stroke-width=".8"/></svg>
<div class="a" style="left:0;top:714px;width:1024px;height:24px;background:#ece9d8;border-top:1px solid #a9a79c"></div>
<div class="a" style="left:0;top:715px;width:1024px;height:1px;background:#fff"></div>
<div class="sp" style="left:5px;width:231px"></div>
<div class="sp" style="left:242px;width:193px"></div>
<div class="sp" style="left:440px;width:30px"></div>
<div class="sp" style="left:475px;width:36px"></div>
<div class="sp" style="left:516px;width:30px"></div>
<div class="sp" style="left:551px;width:30px"></div>
<div class="sp" style="left:586px;width:85px"></div>
<div class="sp" style="left:676px;width:50px"></div>
<div class="sp" style="left:731px;width:37px"></div>
<div class="sp" style="left:773px;width:27px"></div>
<div class="sp" style="left:805px;width:33px"></div>
<div class="t" style="left:10px;top:721.0px;font-size:13px"><span style="word-spacing:2px">Стр. 1</span></div>
<div class="t" style="left:89px;top:721.0px;font-size:13px"><span style="word-spacing:2px">Разд 1</span></div>
<div class="t" style="left:188px;top:721.0px;font-size:13px">1/3</div>
<div class="t dis" style="left:245px;top:721.0px;font-size:13px">На</div>
<div class="t dis" style="left:318px;top:721.0px;font-size:13px">Ст</div>
<div class="t dis" style="left:370px;top:721.0px;font-size:13px">Кол</div>
<div class="t dis" style="left:443px;top:721.6px;font-size:12.3px">ЗАП</div>
<div class="t dis" style="left:477px;top:722.5px;font-size:11.3px">ИСПР</div>
<div class="t dis" style="left:517px;top:721.0px;font-size:13px">ВДЛ</div>
<div class="t dis" style="left:552px;top:721.3px;font-size:12.7px">ЗАМ</div>
<div class="t" style="left:590px;top:721.4px;font-size:12.6px">русский (Рос</div>
<svg class="a" style="left:690px;top:718px" width="22" height="16" viewBox="0 0 22 16"><path d="M1 3C3 2 5 2 7 3.500C9 2 11 2 13 3V12C11 11 9 11 7 12.500C5 11 3 11 1 12Z" fill="#fff" stroke="#000" stroke-width="1"/><path d="M7 3.500V12.500" stroke="#000"/><path d="M11 5L19 13M19 5L11 13" stroke="#c8281c" stroke-width="1.800"/></svg>
<div class="a" style="left:0;top:738px;width:1024px;height:30px;background:linear-gradient(to bottom,#1f2f86 0,#3165c4 3%,#3682e5 6%,#4490e6 10%,#3883e5 12%,#2b71e0 15%,#2663da 18%,#235bd6 20%,#2258d5 23%,#2157d6 38%,#245ddb 54%,#2562df 86%,#245fdc 89%,#2158d4 92%,#1d4ec0 95%,#1941a5 98%)"></div>
<div class="a" style="left:0;top:738px;width:104px;height:30px;border-radius:0 12px 12px 0;background:linear-gradient(to bottom,#2f7a2f 0%,#5cb85c 8%,#4aa64a 15%,#3c963c 30%,#3a923a 60%,#3f9a3f 85%,#2f7f2f 100%);box-shadow:inset -3px 0 4px rgba(0,40,0,.35),2px 0 3px rgba(0,0,40,.4)"></div>
<svg class="a" style="left:10px;top:743px" width="20" height="20" viewBox="0 0 20 20"><path d="M2 3C4.500 1.500 6.500 2 9 3.500L8 9C6 7.500 3.500 7.500 1 8.500Z" fill="#e8532a"/><path d="M10.500 3.500C13 5 15 5 18 3.500L17 9C14.500 10.500 12 10.500 9.500 9Z" fill="#6ac03a"/><path d="M.8 10C3.500 8.500 5.500 9 8 10.500L7 16.500C5 15 2.500 14.500 0 16Z" fill="#3a7ae8"/><path d="M9.500 10.500C12 12 14 12 17 10.500L16 16.500C13.500 18 11 18 8.500 16.500Z" fill="#f4c02a"/></svg>
<div class="t b" style="left:35px;top:743px;font-size:22.500px;font-style:italic;color:#fff;transform:scaleX(.86);transform-origin:0 0;text-shadow:1px 1px 2px #1a4a1a">пуск</div>
<div class="a" style="left:115px;top:742px;width:157px;height:23px;border-radius:3px;background:linear-gradient(to bottom,#5a9af8 0%,#3c81f0 12%,#3a7eec 85%,#2f6cd8 100%);box-shadow:inset 0 0 0 1px rgba(255,255,255,.12)"></div>
<svg class="a" style="left:123px;top:745px" width="17" height="16" viewBox="0 0 17 16"><path d="M1 13.500V2.500H6L7.500 4.500H15.500V13.500Z" fill="#f8d878" stroke="#b8902a" stroke-width=".8"/><path d="M1 13.500V6H15.500V13.500Z" fill="#fce898" stroke="#b8902a" stroke-width=".8"/></svg>
<div class="t" style="left:143px;top:747px;font-size:13px;color:#fff">C:\Мои документ...</div>
<div class="a" style="left:275px;top:742px;width:159px;height:23px;border-radius:3px;background:linear-gradient(to bottom,#183f9c 0%,#1e52b7 15%,#1f55bd 85%,#2359c4 100%);box-shadow:inset 1px 1px 1px rgba(0,0,40,.5)"></div>
<svg class="a" style="left:285px;top:745px" width="16" height="16" viewBox="0 0 16 16"><rect x="3.500" y="1.500" width="11" height="13" fill="#fff" stroke="#6b7fa8"/><path d="M11 1.500 L14.500 5 H11Z" fill="#c9d6ee" stroke="#6b7fa8" stroke-width=".8"/><rect x="0.5" y="3.500" width="9" height="8" fill="#2b4fa8" stroke="#fff" stroke-width=".7"/><path d="M2 5.500 L3.400 10 L5 6.500 L6.600 10 L8 5.500" stroke="#fff" stroke-width="1.200" fill="none"/></svg>
<div class="t" style="left:304px;top:747px;font-size:13px;color:#fff">ЕТС (с 1.05.06)С...</div>
<div class="a" style="left:870px;top:745px;width:17px;height:16px;background:#3f6cc9"></div>
<div class="t" style="left:871px;top:747px;font-size:12px;color:#fff">RU</div>
<div class="a" style="left:906px;top:738px;width:118px;height:30px;background:linear-gradient(to bottom,#0c59b9 0,#139ee9 6%,#18b5f2 10%,#139beb 14%,#1290e8 19%,#0d8dea 63%,#0d9ff1 81%,#0f9eed 88%,#119be9 91%,#1392e2 94%,#137ed7 97%,#095bc9 100%);border-left:1px solid #092e51;box-shadow:inset 1px 0 0 #18bbff"></div>
<svg class="a" style="left:916px;top:744px" width="58" height="18" viewBox="0 0 58 18"><rect x="2" y="1" width="6" height="6" fill="none" stroke="#e8532a" stroke-width="1.800"/><rect x="9" y="3" width="5" height="5" fill="none" stroke="#3a7ae8" stroke-width="1.600"/><rect x="2" y="9" width="6" height="6" fill="none" stroke="#f4c02a" stroke-width="1.800"/><rect x="9" y="9" width="5" height="5" fill="none" stroke="#6ac03a" stroke-width="1.600"/><circle cx="25" cy="7" r="5.500" fill="#8a8a8a" stroke="#444" stroke-width="1"/><circle cx="25" cy="7" r="2.200" fill="#ccc"/><path d="M28 14C30 12 31 10 31.500 8" stroke="#6a8af8" stroke-width="1.200" fill="none"/><path d="M38 9L46 1L53 6L45 15Z" fill="#f8e83a" stroke="#222" stroke-width="1"/><path d="M41 8L48 3M43 10L50 5M44 4L48 12" stroke="#222" stroke-width=".7"/></svg>
<div class="t" style="left:977px;top:747px;font-size:13px;color:#fff">10:54</div>
<div class="a" style="left:969px;top:21px;width:56px;height:20px;background:#ffffe1;border:1px solid #000"></div>
<div class="t" style="left:972px;top:25px;font-size:13px">Закрыть</div>
</div></body></html>
